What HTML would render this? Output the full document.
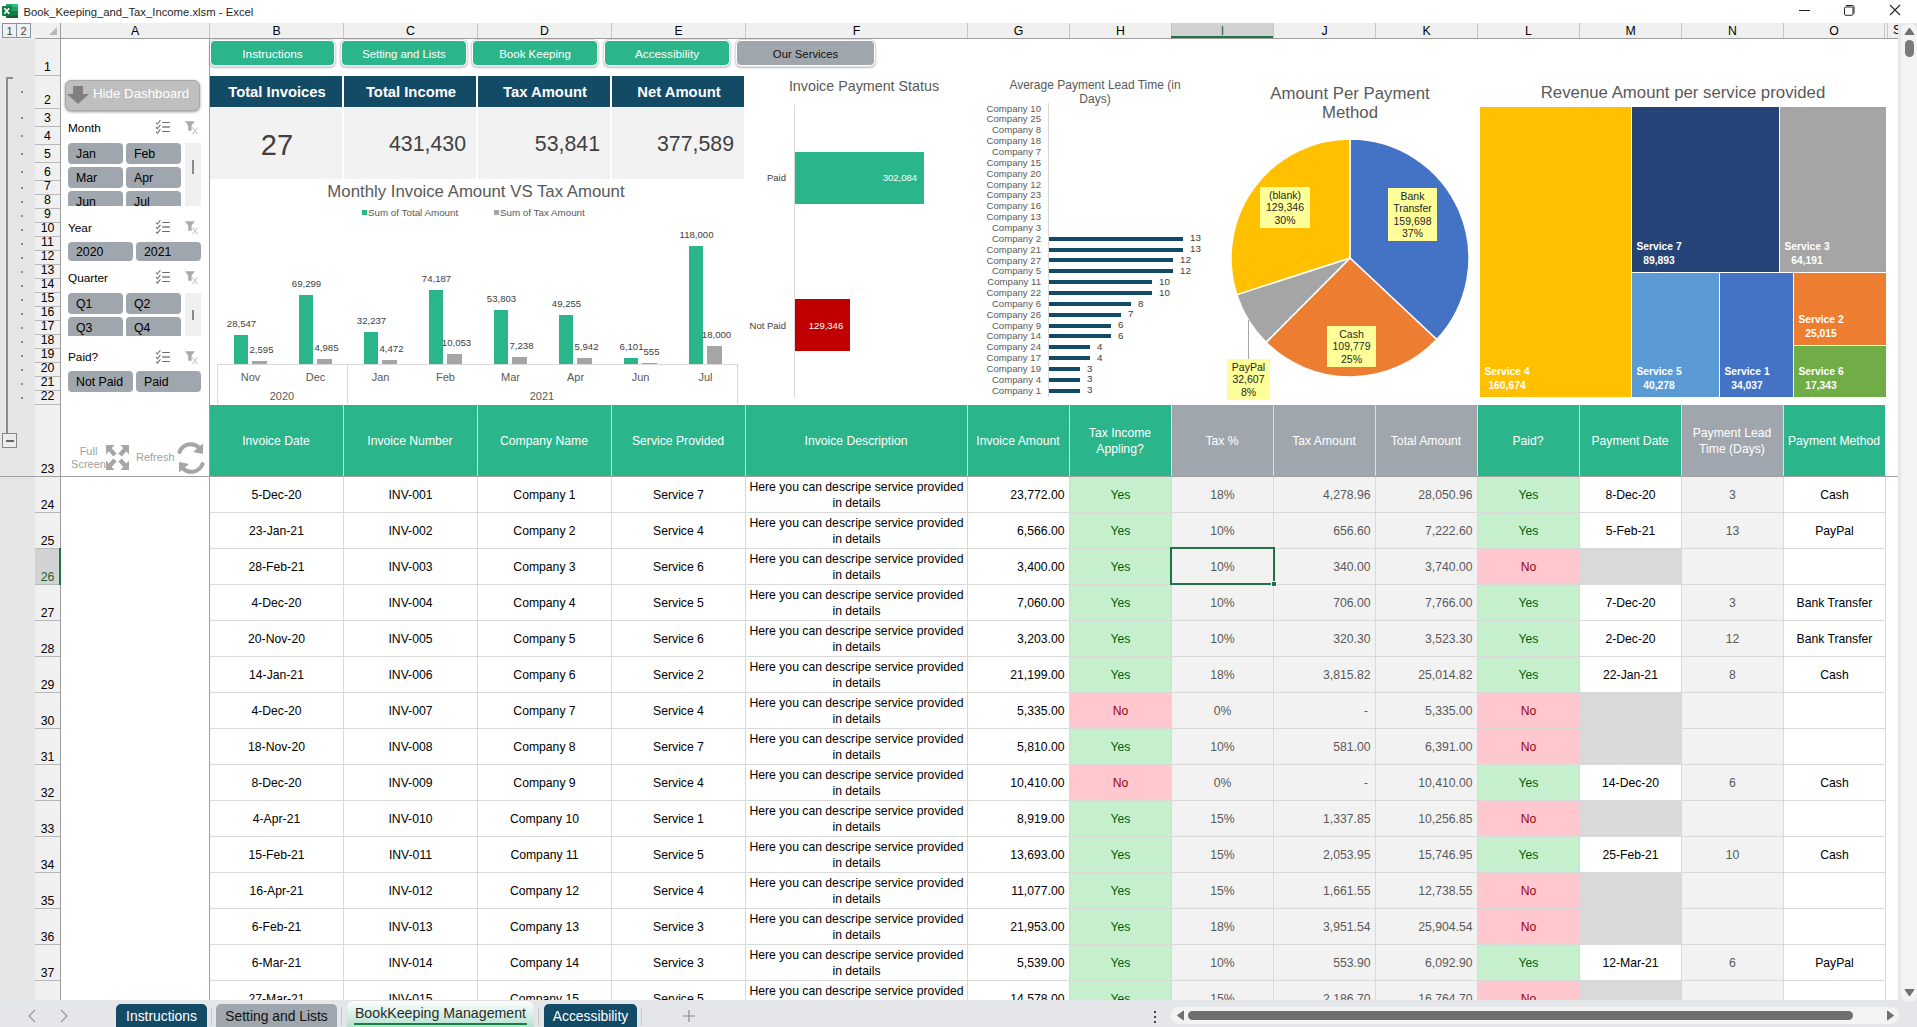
<!DOCTYPE html><html><head><meta charset="utf-8"><title>Book_Keeping_and_Tax_Income.xlsm - Excel</title><style>
html,body{margin:0;padding:0;}body{width:1917px;height:1027px;position:relative;overflow:hidden;background:#fff;font-family:"Liberation Sans",sans-serif;color:#000;}
div{box-sizing:border-box;}
</style></head><body>
<div style="position:absolute;left:0px;top:0px;width:1917px;height:23px;background:#fff;"></div>
<svg style="position:absolute;left:0;top:0" width="24" height="22" viewBox="0 0 24 22"><rect x="6" y="3.9" width="12" height="14" rx="0.8" fill="#21a366"/><rect x="12" y="3.9" width="6" height="2.7" fill="#33c481"/><rect x="6" y="11" width="12" height="4.2" fill="#107c41"/><rect x="6" y="15.2" width="12" height="2.7" fill="#185c37"/><rect x="2" y="6" width="9.7" height="9.9" rx="0.8" fill="#107c41"/><path d="M4.4 8.2 L9.2 13.8 M9.2 8.2 L4.4 13.8" stroke="#fff" stroke-width="1.7"/></svg>
<div style="position:absolute;left:23.5px;top:0.8999999999999986px;height:22.6px;line-height:22.6px;font-size:11.3px;white-space:nowrap;color:#1f1f1f;">Book_Keeping_and_Tax_Income.xlsm - Excel</div>
<div style="position:absolute;left:1799px;top:10px;width:11px;height:1px;background:#222;"></div>
<svg style="position:absolute;left:1842px;top:3px" width="14" height="14" viewBox="0 0 14 14"><rect x="2.5" y="4" width="8.5" height="8.3" rx="1.3" fill="none" stroke="#222" stroke-width="1"/><path d="M4 2.5 H10.5 Q12 2.5 12 4 V10.5" fill="none" stroke="#222" stroke-width="1"/></svg>
<svg style="position:absolute;left:1889px;top:4px" width="12" height="12" viewBox="0 0 12 12"><path d="M1 1 L11 11 M11 1 L1 11" stroke="#222" stroke-width="1.1"/></svg>
<div style="position:absolute;left:0px;top:23px;width:1898px;height:16px;background:#f0f0f0;"></div>
<div style="position:absolute;left:35px;top:38px;width:1863px;height:1px;background:#9e9e9e;"></div>
<div style="position:absolute;left:2px;top:23px;width:15px;height:15px;border:1px solid #8893a0;background:#f0f0f0;"></div>
<div style="position:absolute;left:16px;top:23px;width:15px;height:15px;border:1px solid #8893a0;background:#f0f0f0;"></div>
<div style="position:absolute;left:-0.5px;top:19.5px;width:20px;height:22px;line-height:22px;text-align:center;font-size:11px;white-space:nowrap;color:#444;">1</div>
<div style="position:absolute;left:13.5px;top:19.5px;width:20px;height:22px;line-height:22px;text-align:center;font-size:11px;white-space:nowrap;color:#444;">2</div>
<svg style="position:absolute;left:48px;top:26px" width="10" height="10"><path d="M1 9 L9 9 L9 1 Z" fill="#b8b8b8"/></svg>
<div style="position:absolute;left:60px;top:23px;width:1px;height:15px;background:#9e9e9e;"></div>
<div style="position:absolute;left:209px;top:23px;width:1px;height:15px;background:#c6c6c6;"></div>
<div style="position:absolute;left:105.0px;top:18.7px;width:60px;height:24.6px;line-height:24.6px;text-align:center;font-size:12.3px;white-space:nowrap;color:#000;">A</div>
<div style="position:absolute;left:343px;top:23px;width:1px;height:15px;background:#c6c6c6;"></div>
<div style="position:absolute;left:246.5px;top:18.7px;width:60px;height:24.6px;line-height:24.6px;text-align:center;font-size:12.3px;white-space:nowrap;color:#000;">B</div>
<div style="position:absolute;left:477px;top:23px;width:1px;height:15px;background:#c6c6c6;"></div>
<div style="position:absolute;left:380.5px;top:18.7px;width:60px;height:24.6px;line-height:24.6px;text-align:center;font-size:12.3px;white-space:nowrap;color:#000;">C</div>
<div style="position:absolute;left:611px;top:23px;width:1px;height:15px;background:#c6c6c6;"></div>
<div style="position:absolute;left:514.5px;top:18.7px;width:60px;height:24.6px;line-height:24.6px;text-align:center;font-size:12.3px;white-space:nowrap;color:#000;">D</div>
<div style="position:absolute;left:745px;top:23px;width:1px;height:15px;background:#c6c6c6;"></div>
<div style="position:absolute;left:648.5px;top:18.7px;width:60px;height:24.6px;line-height:24.6px;text-align:center;font-size:12.3px;white-space:nowrap;color:#000;">E</div>
<div style="position:absolute;left:967px;top:23px;width:1px;height:15px;background:#c6c6c6;"></div>
<div style="position:absolute;left:826.5px;top:18.7px;width:60px;height:24.6px;line-height:24.6px;text-align:center;font-size:12.3px;white-space:nowrap;color:#000;">F</div>
<div style="position:absolute;left:1069px;top:23px;width:1px;height:15px;background:#c6c6c6;"></div>
<div style="position:absolute;left:988.5px;top:18.7px;width:60px;height:24.6px;line-height:24.6px;text-align:center;font-size:12.3px;white-space:nowrap;color:#000;">G</div>
<div style="position:absolute;left:1171px;top:23px;width:1px;height:15px;background:#c6c6c6;"></div>
<div style="position:absolute;left:1090.5px;top:18.7px;width:60px;height:24.6px;line-height:24.6px;text-align:center;font-size:12.3px;white-space:nowrap;color:#000;">H</div>
<div style="position:absolute;left:1172px;top:23px;width:101px;height:15px;background:#d2d2d2;"></div>
<div style="position:absolute;left:1171px;top:36px;width:103px;height:2px;background:#217346;"></div>
<div style="position:absolute;left:1273px;top:23px;width:1px;height:15px;background:#c6c6c6;"></div>
<div style="position:absolute;left:1192.5px;top:18.7px;width:60px;height:24.6px;line-height:24.6px;text-align:center;font-size:12.3px;white-space:nowrap;color:#1e5e36;">I</div>
<div style="position:absolute;left:1375px;top:23px;width:1px;height:15px;background:#c6c6c6;"></div>
<div style="position:absolute;left:1294.5px;top:18.7px;width:60px;height:24.6px;line-height:24.6px;text-align:center;font-size:12.3px;white-space:nowrap;color:#000;">J</div>
<div style="position:absolute;left:1477px;top:23px;width:1px;height:15px;background:#c6c6c6;"></div>
<div style="position:absolute;left:1396.5px;top:18.7px;width:60px;height:24.6px;line-height:24.6px;text-align:center;font-size:12.3px;white-space:nowrap;color:#000;">K</div>
<div style="position:absolute;left:1579px;top:23px;width:1px;height:15px;background:#c6c6c6;"></div>
<div style="position:absolute;left:1498.5px;top:18.7px;width:60px;height:24.6px;line-height:24.6px;text-align:center;font-size:12.3px;white-space:nowrap;color:#000;">L</div>
<div style="position:absolute;left:1681px;top:23px;width:1px;height:15px;background:#c6c6c6;"></div>
<div style="position:absolute;left:1600.5px;top:18.7px;width:60px;height:24.6px;line-height:24.6px;text-align:center;font-size:12.3px;white-space:nowrap;color:#000;">M</div>
<div style="position:absolute;left:1783px;top:23px;width:1px;height:15px;background:#c6c6c6;"></div>
<div style="position:absolute;left:1702.5px;top:18.7px;width:60px;height:24.6px;line-height:24.6px;text-align:center;font-size:12.3px;white-space:nowrap;color:#000;">N</div>
<div style="position:absolute;left:1884px;top:23px;width:1px;height:15px;background:#c6c6c6;"></div>
<div style="position:absolute;left:1804.0px;top:18.7px;width:60px;height:24.6px;line-height:24.6px;text-align:center;font-size:12.3px;white-space:nowrap;color:#000;">O</div>
<div style="position:absolute;left:1887px;top:23px;width:1px;height:15px;background:#c6c6c6;"></div>
<div style="position:absolute;left:1888px;top:23px;width:10px;height:15px;overflow:hidden;"><div style="position:absolute;left:5px;top:0;font-size:12.3px;line-height:15px;">S</div></div>
<div style="position:absolute;left:0px;top:39px;width:35px;height:961px;background:#e6e6e6;"></div>
<div style="position:absolute;left:35px;top:39px;width:25px;height:961px;background:#f0f0f0;"></div>
<div style="position:absolute;left:60px;top:39px;width:1px;height:961px;background:#9e9e9e;"></div>
<div style="position:absolute;left:35px;top:75px;width:25px;height:1px;background:#b8b8b8;"></div>
<div style="position:absolute;left:35px;top:59.2px;width:25px;height:16px;line-height:16px;text-align:center;font-size:12.3px;color:#000;">1</div>
<div style="position:absolute;left:35px;top:108px;width:25px;height:1px;background:#b8b8b8;"></div>
<div style="position:absolute;left:35px;top:92.2px;width:25px;height:16px;line-height:16px;text-align:center;font-size:12.3px;color:#000;">2</div>
<div style="position:absolute;left:21px;top:91px;width:2px;height:2px;background:#8a8a8a;"></div>
<div style="position:absolute;left:35px;top:126px;width:25px;height:1px;background:#b8b8b8;"></div>
<div style="position:absolute;left:35px;top:110.2px;width:25px;height:16px;line-height:16px;text-align:center;font-size:12.3px;color:#000;">3</div>
<div style="position:absolute;left:21px;top:117px;width:2px;height:2px;background:#8a8a8a;"></div>
<div style="position:absolute;left:35px;top:144px;width:25px;height:1px;background:#b8b8b8;"></div>
<div style="position:absolute;left:35px;top:128.2px;width:25px;height:16px;line-height:16px;text-align:center;font-size:12.3px;color:#000;">4</div>
<div style="position:absolute;left:21px;top:135px;width:2px;height:2px;background:#8a8a8a;"></div>
<div style="position:absolute;left:35px;top:162px;width:25px;height:1px;background:#b8b8b8;"></div>
<div style="position:absolute;left:35px;top:146.2px;width:25px;height:16px;line-height:16px;text-align:center;font-size:12.3px;color:#000;">5</div>
<div style="position:absolute;left:21px;top:153px;width:2px;height:2px;background:#8a8a8a;"></div>
<div style="position:absolute;left:35px;top:180px;width:25px;height:1px;background:#b8b8b8;"></div>
<div style="position:absolute;left:35px;top:164.2px;width:25px;height:16px;line-height:16px;text-align:center;font-size:12.3px;color:#000;">6</div>
<div style="position:absolute;left:21px;top:171px;width:2px;height:2px;background:#8a8a8a;"></div>
<div style="position:absolute;left:35px;top:194px;width:25px;height:1px;background:#b8b8b8;"></div>
<div style="position:absolute;left:35px;top:178.2px;width:25px;height:16px;line-height:16px;text-align:center;font-size:12.3px;color:#000;">7</div>
<div style="position:absolute;left:21px;top:187px;width:2px;height:2px;background:#8a8a8a;"></div>
<div style="position:absolute;left:35px;top:208px;width:25px;height:1px;background:#b8b8b8;"></div>
<div style="position:absolute;left:35px;top:192.2px;width:25px;height:16px;line-height:16px;text-align:center;font-size:12.3px;color:#000;">8</div>
<div style="position:absolute;left:21px;top:201px;width:2px;height:2px;background:#8a8a8a;"></div>
<div style="position:absolute;left:35px;top:222px;width:25px;height:1px;background:#b8b8b8;"></div>
<div style="position:absolute;left:35px;top:206.2px;width:25px;height:16px;line-height:16px;text-align:center;font-size:12.3px;color:#000;">9</div>
<div style="position:absolute;left:21px;top:215px;width:2px;height:2px;background:#8a8a8a;"></div>
<div style="position:absolute;left:35px;top:236px;width:25px;height:1px;background:#b8b8b8;"></div>
<div style="position:absolute;left:35px;top:220.2px;width:25px;height:16px;line-height:16px;text-align:center;font-size:12.3px;color:#000;">10</div>
<div style="position:absolute;left:21px;top:229px;width:2px;height:2px;background:#8a8a8a;"></div>
<div style="position:absolute;left:35px;top:250px;width:25px;height:1px;background:#b8b8b8;"></div>
<div style="position:absolute;left:35px;top:234.2px;width:25px;height:16px;line-height:16px;text-align:center;font-size:12.3px;color:#000;">11</div>
<div style="position:absolute;left:21px;top:243px;width:2px;height:2px;background:#8a8a8a;"></div>
<div style="position:absolute;left:35px;top:264px;width:25px;height:1px;background:#b8b8b8;"></div>
<div style="position:absolute;left:35px;top:248.2px;width:25px;height:16px;line-height:16px;text-align:center;font-size:12.3px;color:#000;">12</div>
<div style="position:absolute;left:21px;top:257px;width:2px;height:2px;background:#8a8a8a;"></div>
<div style="position:absolute;left:35px;top:278px;width:25px;height:1px;background:#b8b8b8;"></div>
<div style="position:absolute;left:35px;top:262.2px;width:25px;height:16px;line-height:16px;text-align:center;font-size:12.3px;color:#000;">13</div>
<div style="position:absolute;left:21px;top:271px;width:2px;height:2px;background:#8a8a8a;"></div>
<div style="position:absolute;left:35px;top:292px;width:25px;height:1px;background:#b8b8b8;"></div>
<div style="position:absolute;left:35px;top:276.2px;width:25px;height:16px;line-height:16px;text-align:center;font-size:12.3px;color:#000;">14</div>
<div style="position:absolute;left:21px;top:285px;width:2px;height:2px;background:#8a8a8a;"></div>
<div style="position:absolute;left:35px;top:306px;width:25px;height:1px;background:#b8b8b8;"></div>
<div style="position:absolute;left:35px;top:290.2px;width:25px;height:16px;line-height:16px;text-align:center;font-size:12.3px;color:#000;">15</div>
<div style="position:absolute;left:21px;top:299px;width:2px;height:2px;background:#8a8a8a;"></div>
<div style="position:absolute;left:35px;top:320px;width:25px;height:1px;background:#b8b8b8;"></div>
<div style="position:absolute;left:35px;top:304.2px;width:25px;height:16px;line-height:16px;text-align:center;font-size:12.3px;color:#000;">16</div>
<div style="position:absolute;left:21px;top:313px;width:2px;height:2px;background:#8a8a8a;"></div>
<div style="position:absolute;left:35px;top:334px;width:25px;height:1px;background:#b8b8b8;"></div>
<div style="position:absolute;left:35px;top:318.2px;width:25px;height:16px;line-height:16px;text-align:center;font-size:12.3px;color:#000;">17</div>
<div style="position:absolute;left:21px;top:327px;width:2px;height:2px;background:#8a8a8a;"></div>
<div style="position:absolute;left:35px;top:348px;width:25px;height:1px;background:#b8b8b8;"></div>
<div style="position:absolute;left:35px;top:332.2px;width:25px;height:16px;line-height:16px;text-align:center;font-size:12.3px;color:#000;">18</div>
<div style="position:absolute;left:21px;top:341px;width:2px;height:2px;background:#8a8a8a;"></div>
<div style="position:absolute;left:35px;top:362px;width:25px;height:1px;background:#b8b8b8;"></div>
<div style="position:absolute;left:35px;top:346.2px;width:25px;height:16px;line-height:16px;text-align:center;font-size:12.3px;color:#000;">19</div>
<div style="position:absolute;left:21px;top:355px;width:2px;height:2px;background:#8a8a8a;"></div>
<div style="position:absolute;left:35px;top:376px;width:25px;height:1px;background:#b8b8b8;"></div>
<div style="position:absolute;left:35px;top:360.2px;width:25px;height:16px;line-height:16px;text-align:center;font-size:12.3px;color:#000;">20</div>
<div style="position:absolute;left:21px;top:369px;width:2px;height:2px;background:#8a8a8a;"></div>
<div style="position:absolute;left:35px;top:390px;width:25px;height:1px;background:#b8b8b8;"></div>
<div style="position:absolute;left:35px;top:374.2px;width:25px;height:16px;line-height:16px;text-align:center;font-size:12.3px;color:#000;">21</div>
<div style="position:absolute;left:21px;top:383px;width:2px;height:2px;background:#8a8a8a;"></div>
<div style="position:absolute;left:35px;top:404px;width:25px;height:1px;background:#b8b8b8;"></div>
<div style="position:absolute;left:35px;top:388.2px;width:25px;height:16px;line-height:16px;text-align:center;font-size:12.3px;color:#000;">22</div>
<div style="position:absolute;left:21px;top:397px;width:2px;height:2px;background:#8a8a8a;"></div>
<div style="position:absolute;left:35px;top:476px;width:25px;height:1px;background:#b8b8b8;"></div>
<div style="position:absolute;left:35px;top:461px;width:25px;height:16px;line-height:16px;text-align:center;font-size:12.3px;color:#000;">23</div>
<div style="position:absolute;left:35px;top:512px;width:25px;height:1px;background:#b8b8b8;"></div>
<div style="position:absolute;left:35px;top:497px;width:25px;height:16px;line-height:16px;text-align:center;font-size:12.3px;color:#000;">24</div>
<div style="position:absolute;left:35px;top:548px;width:25px;height:1px;background:#b8b8b8;"></div>
<div style="position:absolute;left:35px;top:533px;width:25px;height:16px;line-height:16px;text-align:center;font-size:12.3px;color:#000;">25</div>
<div style="position:absolute;left:35px;top:584px;width:25px;height:1px;background:#b8b8b8;"></div>
<div style="position:absolute;left:35px;top:549px;width:25px;height:35px;background:#d2d2d2;"></div>
<div style="position:absolute;left:59px;top:548px;width:2px;height:37px;background:#217346;"></div>
<div style="position:absolute;left:35px;top:569px;width:25px;height:16px;line-height:16px;text-align:center;font-size:12.3px;color:#1e5e36;">26</div>
<div style="position:absolute;left:35px;top:620px;width:25px;height:1px;background:#b8b8b8;"></div>
<div style="position:absolute;left:35px;top:605px;width:25px;height:16px;line-height:16px;text-align:center;font-size:12.3px;color:#000;">27</div>
<div style="position:absolute;left:35px;top:656px;width:25px;height:1px;background:#b8b8b8;"></div>
<div style="position:absolute;left:35px;top:641px;width:25px;height:16px;line-height:16px;text-align:center;font-size:12.3px;color:#000;">28</div>
<div style="position:absolute;left:35px;top:692px;width:25px;height:1px;background:#b8b8b8;"></div>
<div style="position:absolute;left:35px;top:677px;width:25px;height:16px;line-height:16px;text-align:center;font-size:12.3px;color:#000;">29</div>
<div style="position:absolute;left:35px;top:728px;width:25px;height:1px;background:#b8b8b8;"></div>
<div style="position:absolute;left:35px;top:713px;width:25px;height:16px;line-height:16px;text-align:center;font-size:12.3px;color:#000;">30</div>
<div style="position:absolute;left:35px;top:764px;width:25px;height:1px;background:#b8b8b8;"></div>
<div style="position:absolute;left:35px;top:749px;width:25px;height:16px;line-height:16px;text-align:center;font-size:12.3px;color:#000;">31</div>
<div style="position:absolute;left:35px;top:800px;width:25px;height:1px;background:#b8b8b8;"></div>
<div style="position:absolute;left:35px;top:785px;width:25px;height:16px;line-height:16px;text-align:center;font-size:12.3px;color:#000;">32</div>
<div style="position:absolute;left:35px;top:836px;width:25px;height:1px;background:#b8b8b8;"></div>
<div style="position:absolute;left:35px;top:821px;width:25px;height:16px;line-height:16px;text-align:center;font-size:12.3px;color:#000;">33</div>
<div style="position:absolute;left:35px;top:872px;width:25px;height:1px;background:#b8b8b8;"></div>
<div style="position:absolute;left:35px;top:857px;width:25px;height:16px;line-height:16px;text-align:center;font-size:12.3px;color:#000;">34</div>
<div style="position:absolute;left:35px;top:908px;width:25px;height:1px;background:#b8b8b8;"></div>
<div style="position:absolute;left:35px;top:893px;width:25px;height:16px;line-height:16px;text-align:center;font-size:12.3px;color:#000;">35</div>
<div style="position:absolute;left:35px;top:944px;width:25px;height:1px;background:#b8b8b8;"></div>
<div style="position:absolute;left:35px;top:929px;width:25px;height:16px;line-height:16px;text-align:center;font-size:12.3px;color:#000;">36</div>
<div style="position:absolute;left:35px;top:980px;width:25px;height:1px;background:#b8b8b8;"></div>
<div style="position:absolute;left:35px;top:965px;width:25px;height:16px;line-height:16px;text-align:center;font-size:12.3px;color:#000;">37</div>
<div style="position:absolute;left:35px;top:1001px;width:25px;height:16px;line-height:16px;text-align:center;font-size:12.3px;color:#000;">38</div>
<div style="position:absolute;left:6px;top:77px;width:2px;height:356px;background:#8c8c8c;"></div>
<div style="position:absolute;left:6px;top:77px;width:7px;height:2px;background:#8c8c8c;"></div>
<div style="position:absolute;left:2px;top:433px;width:15px;height:15px;border:1px solid #7f8a96;background:#ececec;"></div>
<div style="position:absolute;left:6px;top:440px;width:8px;height:2px;background:#666;"></div>
<div style="position:absolute;left:61px;top:39px;width:1837px;height:961px;background:#fff;"></div>
<div style="position:absolute;left:209px;top:405px;width:134px;height:71px;background:#2bb58b;"></div>
<div style="position:absolute;left:209px;top:405px;width:134px;height:71px;display:flex;align-items:center;justify-content:center;text-align:center;color:#fff;font-size:12.2px;line-height:16px;">Invoice Date</div>
<div style="position:absolute;left:343px;top:405px;width:134px;height:71px;background:#2bb58b;"></div>
<div style="position:absolute;left:343px;top:405px;width:134px;height:71px;display:flex;align-items:center;justify-content:center;text-align:center;color:#fff;font-size:12.2px;line-height:16px;">Invoice Number</div>
<div style="position:absolute;left:477px;top:405px;width:134px;height:71px;background:#2bb58b;"></div>
<div style="position:absolute;left:477px;top:405px;width:134px;height:71px;display:flex;align-items:center;justify-content:center;text-align:center;color:#fff;font-size:12.2px;line-height:16px;">Company Name</div>
<div style="position:absolute;left:611px;top:405px;width:134px;height:71px;background:#2bb58b;"></div>
<div style="position:absolute;left:611px;top:405px;width:134px;height:71px;display:flex;align-items:center;justify-content:center;text-align:center;color:#fff;font-size:12.2px;line-height:16px;">Service Provided</div>
<div style="position:absolute;left:745px;top:405px;width:222px;height:71px;background:#2bb58b;"></div>
<div style="position:absolute;left:745px;top:405px;width:222px;height:71px;display:flex;align-items:center;justify-content:center;text-align:center;color:#fff;font-size:12.2px;line-height:16px;">Invoice Description</div>
<div style="position:absolute;left:967px;top:405px;width:102px;height:71px;background:#2bb58b;"></div>
<div style="position:absolute;left:967px;top:405px;width:102px;height:71px;display:flex;align-items:center;justify-content:center;text-align:center;color:#fff;font-size:12.2px;line-height:16px;">Invoice Amount</div>
<div style="position:absolute;left:1069px;top:405px;width:102px;height:71px;background:#2bb58b;"></div>
<div style="position:absolute;left:1069px;top:405px;width:102px;height:71px;display:flex;align-items:center;justify-content:center;text-align:center;color:#fff;font-size:12.2px;line-height:16px;">Tax Income<br>Appling?</div>
<div style="position:absolute;left:1171px;top:405px;width:102px;height:71px;background:#9fa6ad;"></div>
<div style="position:absolute;left:1171px;top:405px;width:102px;height:71px;display:flex;align-items:center;justify-content:center;text-align:center;color:#fff;font-size:12.2px;line-height:16px;">Tax %</div>
<div style="position:absolute;left:1273px;top:405px;width:102px;height:71px;background:#9fa6ad;"></div>
<div style="position:absolute;left:1273px;top:405px;width:102px;height:71px;display:flex;align-items:center;justify-content:center;text-align:center;color:#fff;font-size:12.2px;line-height:16px;">Tax Amount</div>
<div style="position:absolute;left:1375px;top:405px;width:102px;height:71px;background:#9fa6ad;"></div>
<div style="position:absolute;left:1375px;top:405px;width:102px;height:71px;display:flex;align-items:center;justify-content:center;text-align:center;color:#fff;font-size:12.2px;line-height:16px;">Total Amount</div>
<div style="position:absolute;left:1477px;top:405px;width:102px;height:71px;background:#2bb58b;"></div>
<div style="position:absolute;left:1477px;top:405px;width:102px;height:71px;display:flex;align-items:center;justify-content:center;text-align:center;color:#fff;font-size:12.2px;line-height:16px;">Paid?</div>
<div style="position:absolute;left:1579px;top:405px;width:102px;height:71px;background:#2bb58b;"></div>
<div style="position:absolute;left:1579px;top:405px;width:102px;height:71px;display:flex;align-items:center;justify-content:center;text-align:center;color:#fff;font-size:12.2px;line-height:16px;">Payment Date</div>
<div style="position:absolute;left:1681px;top:405px;width:102px;height:71px;background:#9fa6ad;"></div>
<div style="position:absolute;left:1681px;top:405px;width:102px;height:71px;display:flex;align-items:center;justify-content:center;text-align:center;color:#fff;font-size:12.2px;line-height:16px;">Payment Lead<br>Time (Days)</div>
<div style="position:absolute;left:1783px;top:405px;width:102px;height:71px;background:#2bb58b;"></div>
<div style="position:absolute;left:1783px;top:405px;width:102px;height:71px;display:flex;align-items:center;justify-content:center;text-align:center;color:#fff;font-size:12.2px;line-height:16px;">Payment Method</div>
<div style="position:absolute;left:343px;top:405px;width:1px;height:71px;background:#dedede;"></div>
<div style="position:absolute;left:477px;top:405px;width:1px;height:71px;background:#dedede;"></div>
<div style="position:absolute;left:611px;top:405px;width:1px;height:71px;background:#dedede;"></div>
<div style="position:absolute;left:745px;top:405px;width:1px;height:71px;background:#dedede;"></div>
<div style="position:absolute;left:967px;top:405px;width:1px;height:71px;background:#dedede;"></div>
<div style="position:absolute;left:1069px;top:405px;width:1px;height:71px;background:#dedede;"></div>
<div style="position:absolute;left:1171px;top:405px;width:1px;height:71px;background:#dedede;"></div>
<div style="position:absolute;left:1273px;top:405px;width:1px;height:71px;background:#dedede;"></div>
<div style="position:absolute;left:1375px;top:405px;width:1px;height:71px;background:#dedede;"></div>
<div style="position:absolute;left:1477px;top:405px;width:1px;height:71px;background:#dedede;"></div>
<div style="position:absolute;left:1579px;top:405px;width:1px;height:71px;background:#dedede;"></div>
<div style="position:absolute;left:1681px;top:405px;width:1px;height:71px;background:#dedede;"></div>
<div style="position:absolute;left:1783px;top:405px;width:1px;height:71px;background:#dedede;"></div>
<div style="position:absolute;left:209px;top:476px;width:134px;height:36px;background:#fff;"></div>
<div style="position:absolute;left:343px;top:476px;width:134px;height:36px;background:#fff;"></div>
<div style="position:absolute;left:477px;top:476px;width:134px;height:36px;background:#fff;"></div>
<div style="position:absolute;left:611px;top:476px;width:134px;height:36px;background:#fff;"></div>
<div style="position:absolute;left:745px;top:476px;width:222px;height:36px;background:#fff;"></div>
<div style="position:absolute;left:967px;top:476px;width:102px;height:36px;background:#fff;"></div>
<div style="position:absolute;left:1069px;top:476px;width:102px;height:36px;background:#c6efce;"></div>
<div style="position:absolute;left:1171px;top:476px;width:102px;height:36px;background:#f2f2f2;"></div>
<div style="position:absolute;left:1273px;top:476px;width:102px;height:36px;background:#f2f2f2;"></div>
<div style="position:absolute;left:1375px;top:476px;width:102px;height:36px;background:#f2f2f2;"></div>
<div style="position:absolute;left:1477px;top:476px;width:102px;height:36px;background:#c6efce;"></div>
<div style="position:absolute;left:1579px;top:476px;width:102px;height:36px;background:#fff;"></div>
<div style="position:absolute;left:1681px;top:476px;width:102px;height:36px;background:#f2f2f2;"></div>
<div style="position:absolute;left:1783px;top:476px;width:102px;height:36px;background:#fff;"></div>
<div style="position:absolute;left:209.5px;top:483.3px;width:134px;height:24.4px;line-height:24.4px;text-align:center;font-size:12.2px;white-space:nowrap;color:#000;">5-Dec-20</div>
<div style="position:absolute;left:343.5px;top:483.3px;width:134px;height:24.4px;line-height:24.4px;text-align:center;font-size:12.2px;white-space:nowrap;color:#000;">INV-001</div>
<div style="position:absolute;left:477.5px;top:483.3px;width:134px;height:24.4px;line-height:24.4px;text-align:center;font-size:12.2px;white-space:nowrap;color:#000;">Company 1</div>
<div style="position:absolute;left:611.5px;top:483.3px;width:134px;height:24.4px;line-height:24.4px;text-align:center;font-size:12.2px;white-space:nowrap;color:#000;">Service 7</div>
<div style="position:absolute;left:1579.5px;top:483.3px;width:102px;height:24.4px;line-height:24.4px;text-align:center;font-size:12.2px;white-space:nowrap;color:#000;">8-Dec-20</div>
<div style="position:absolute;left:1783.5px;top:483.3px;width:102px;height:24.4px;line-height:24.4px;text-align:center;font-size:12.2px;white-space:nowrap;color:#000;">Cash</div>
<div style="position:absolute;left:746px;top:479px;width:221px;text-align:center;font-size:12.2px;line-height:16px;color:#000;">Here you can descripe service provided<br>in details</div>
<div style="position:absolute;left:964.5px;top:483.3px;width:100px;height:24.4px;line-height:24.4px;text-align:right;font-size:12.2px;white-space:nowrap;color:#000;">23,772.00</div>
<div style="position:absolute;left:1070.5px;top:483.3px;width:100px;height:24.4px;line-height:24.4px;text-align:center;font-size:12.2px;white-space:nowrap;color:#006100;">Yes</div>
<div style="position:absolute;left:1172.5px;top:483.3px;width:100px;height:24.4px;line-height:24.4px;text-align:center;font-size:12.2px;white-space:nowrap;color:#595959;">18%</div>
<div style="position:absolute;left:1270.5px;top:483.3px;width:100px;height:24.4px;line-height:24.4px;text-align:right;font-size:12.2px;white-space:nowrap;color:#595959;">4,278.96</div>
<div style="position:absolute;left:1372.5px;top:483.3px;width:100px;height:24.4px;line-height:24.4px;text-align:right;font-size:12.2px;white-space:nowrap;color:#595959;">28,050.96</div>
<div style="position:absolute;left:1478.5px;top:483.3px;width:100px;height:24.4px;line-height:24.4px;text-align:center;font-size:12.2px;white-space:nowrap;color:#006100;">Yes</div>
<div style="position:absolute;left:1682.5px;top:483.3px;width:100px;height:24.4px;line-height:24.4px;text-align:center;font-size:12.2px;white-space:nowrap;color:#595959;">3</div>
<div style="position:absolute;left:209px;top:512px;width:134px;height:36px;background:#fff;"></div>
<div style="position:absolute;left:343px;top:512px;width:134px;height:36px;background:#fff;"></div>
<div style="position:absolute;left:477px;top:512px;width:134px;height:36px;background:#fff;"></div>
<div style="position:absolute;left:611px;top:512px;width:134px;height:36px;background:#fff;"></div>
<div style="position:absolute;left:745px;top:512px;width:222px;height:36px;background:#fff;"></div>
<div style="position:absolute;left:967px;top:512px;width:102px;height:36px;background:#fff;"></div>
<div style="position:absolute;left:1069px;top:512px;width:102px;height:36px;background:#c6efce;"></div>
<div style="position:absolute;left:1171px;top:512px;width:102px;height:36px;background:#f2f2f2;"></div>
<div style="position:absolute;left:1273px;top:512px;width:102px;height:36px;background:#f2f2f2;"></div>
<div style="position:absolute;left:1375px;top:512px;width:102px;height:36px;background:#f2f2f2;"></div>
<div style="position:absolute;left:1477px;top:512px;width:102px;height:36px;background:#c6efce;"></div>
<div style="position:absolute;left:1579px;top:512px;width:102px;height:36px;background:#fff;"></div>
<div style="position:absolute;left:1681px;top:512px;width:102px;height:36px;background:#f2f2f2;"></div>
<div style="position:absolute;left:1783px;top:512px;width:102px;height:36px;background:#fff;"></div>
<div style="position:absolute;left:209.5px;top:519.3px;width:134px;height:24.4px;line-height:24.4px;text-align:center;font-size:12.2px;white-space:nowrap;color:#000;">23-Jan-21</div>
<div style="position:absolute;left:343.5px;top:519.3px;width:134px;height:24.4px;line-height:24.4px;text-align:center;font-size:12.2px;white-space:nowrap;color:#000;">INV-002</div>
<div style="position:absolute;left:477.5px;top:519.3px;width:134px;height:24.4px;line-height:24.4px;text-align:center;font-size:12.2px;white-space:nowrap;color:#000;">Company 2</div>
<div style="position:absolute;left:611.5px;top:519.3px;width:134px;height:24.4px;line-height:24.4px;text-align:center;font-size:12.2px;white-space:nowrap;color:#000;">Service 4</div>
<div style="position:absolute;left:1579.5px;top:519.3px;width:102px;height:24.4px;line-height:24.4px;text-align:center;font-size:12.2px;white-space:nowrap;color:#000;">5-Feb-21</div>
<div style="position:absolute;left:1783.5px;top:519.3px;width:102px;height:24.4px;line-height:24.4px;text-align:center;font-size:12.2px;white-space:nowrap;color:#000;">PayPal</div>
<div style="position:absolute;left:746px;top:515px;width:221px;text-align:center;font-size:12.2px;line-height:16px;color:#000;">Here you can descripe service provided<br>in details</div>
<div style="position:absolute;left:964.5px;top:519.3px;width:100px;height:24.4px;line-height:24.4px;text-align:right;font-size:12.2px;white-space:nowrap;color:#000;">6,566.00</div>
<div style="position:absolute;left:1070.5px;top:519.3px;width:100px;height:24.4px;line-height:24.4px;text-align:center;font-size:12.2px;white-space:nowrap;color:#006100;">Yes</div>
<div style="position:absolute;left:1172.5px;top:519.3px;width:100px;height:24.4px;line-height:24.4px;text-align:center;font-size:12.2px;white-space:nowrap;color:#595959;">10%</div>
<div style="position:absolute;left:1270.5px;top:519.3px;width:100px;height:24.4px;line-height:24.4px;text-align:right;font-size:12.2px;white-space:nowrap;color:#595959;">656.60</div>
<div style="position:absolute;left:1372.5px;top:519.3px;width:100px;height:24.4px;line-height:24.4px;text-align:right;font-size:12.2px;white-space:nowrap;color:#595959;">7,222.60</div>
<div style="position:absolute;left:1478.5px;top:519.3px;width:100px;height:24.4px;line-height:24.4px;text-align:center;font-size:12.2px;white-space:nowrap;color:#006100;">Yes</div>
<div style="position:absolute;left:1682.5px;top:519.3px;width:100px;height:24.4px;line-height:24.4px;text-align:center;font-size:12.2px;white-space:nowrap;color:#595959;">13</div>
<div style="position:absolute;left:209px;top:548px;width:134px;height:36px;background:#fff;"></div>
<div style="position:absolute;left:343px;top:548px;width:134px;height:36px;background:#fff;"></div>
<div style="position:absolute;left:477px;top:548px;width:134px;height:36px;background:#fff;"></div>
<div style="position:absolute;left:611px;top:548px;width:134px;height:36px;background:#fff;"></div>
<div style="position:absolute;left:745px;top:548px;width:222px;height:36px;background:#fff;"></div>
<div style="position:absolute;left:967px;top:548px;width:102px;height:36px;background:#fff;"></div>
<div style="position:absolute;left:1069px;top:548px;width:102px;height:36px;background:#c6efce;"></div>
<div style="position:absolute;left:1171px;top:548px;width:102px;height:36px;background:#f2f2f2;"></div>
<div style="position:absolute;left:1273px;top:548px;width:102px;height:36px;background:#f2f2f2;"></div>
<div style="position:absolute;left:1375px;top:548px;width:102px;height:36px;background:#f2f2f2;"></div>
<div style="position:absolute;left:1477px;top:548px;width:102px;height:36px;background:#ffc7ce;"></div>
<div style="position:absolute;left:1579px;top:548px;width:102px;height:36px;background:#d9d9d9;"></div>
<div style="position:absolute;left:1681px;top:548px;width:102px;height:36px;background:#f2f2f2;"></div>
<div style="position:absolute;left:1783px;top:548px;width:102px;height:36px;background:#fff;"></div>
<div style="position:absolute;left:209.5px;top:555.3px;width:134px;height:24.4px;line-height:24.4px;text-align:center;font-size:12.2px;white-space:nowrap;color:#000;">28-Feb-21</div>
<div style="position:absolute;left:343.5px;top:555.3px;width:134px;height:24.4px;line-height:24.4px;text-align:center;font-size:12.2px;white-space:nowrap;color:#000;">INV-003</div>
<div style="position:absolute;left:477.5px;top:555.3px;width:134px;height:24.4px;line-height:24.4px;text-align:center;font-size:12.2px;white-space:nowrap;color:#000;">Company 3</div>
<div style="position:absolute;left:611.5px;top:555.3px;width:134px;height:24.4px;line-height:24.4px;text-align:center;font-size:12.2px;white-space:nowrap;color:#000;">Service 6</div>
<div style="position:absolute;left:1579.5px;top:555.3px;width:102px;height:24.4px;line-height:24.4px;text-align:center;font-size:12.2px;white-space:nowrap;color:#000;"></div>
<div style="position:absolute;left:1783.5px;top:555.3px;width:102px;height:24.4px;line-height:24.4px;text-align:center;font-size:12.2px;white-space:nowrap;color:#000;"></div>
<div style="position:absolute;left:746px;top:551px;width:221px;text-align:center;font-size:12.2px;line-height:16px;color:#000;">Here you can descripe service provided<br>in details</div>
<div style="position:absolute;left:964.5px;top:555.3px;width:100px;height:24.4px;line-height:24.4px;text-align:right;font-size:12.2px;white-space:nowrap;color:#000;">3,400.00</div>
<div style="position:absolute;left:1070.5px;top:555.3px;width:100px;height:24.4px;line-height:24.4px;text-align:center;font-size:12.2px;white-space:nowrap;color:#006100;">Yes</div>
<div style="position:absolute;left:1172.5px;top:555.3px;width:100px;height:24.4px;line-height:24.4px;text-align:center;font-size:12.2px;white-space:nowrap;color:#595959;">10%</div>
<div style="position:absolute;left:1270.5px;top:555.3px;width:100px;height:24.4px;line-height:24.4px;text-align:right;font-size:12.2px;white-space:nowrap;color:#595959;">340.00</div>
<div style="position:absolute;left:1372.5px;top:555.3px;width:100px;height:24.4px;line-height:24.4px;text-align:right;font-size:12.2px;white-space:nowrap;color:#595959;">3,740.00</div>
<div style="position:absolute;left:1478.5px;top:555.3px;width:100px;height:24.4px;line-height:24.4px;text-align:center;font-size:12.2px;white-space:nowrap;color:#9c0006;">No</div>
<div style="position:absolute;left:1682.5px;top:555.3px;width:100px;height:24.4px;line-height:24.4px;text-align:center;font-size:12.2px;white-space:nowrap;color:#595959;"></div>
<div style="position:absolute;left:209px;top:584px;width:134px;height:36px;background:#fff;"></div>
<div style="position:absolute;left:343px;top:584px;width:134px;height:36px;background:#fff;"></div>
<div style="position:absolute;left:477px;top:584px;width:134px;height:36px;background:#fff;"></div>
<div style="position:absolute;left:611px;top:584px;width:134px;height:36px;background:#fff;"></div>
<div style="position:absolute;left:745px;top:584px;width:222px;height:36px;background:#fff;"></div>
<div style="position:absolute;left:967px;top:584px;width:102px;height:36px;background:#fff;"></div>
<div style="position:absolute;left:1069px;top:584px;width:102px;height:36px;background:#c6efce;"></div>
<div style="position:absolute;left:1171px;top:584px;width:102px;height:36px;background:#f2f2f2;"></div>
<div style="position:absolute;left:1273px;top:584px;width:102px;height:36px;background:#f2f2f2;"></div>
<div style="position:absolute;left:1375px;top:584px;width:102px;height:36px;background:#f2f2f2;"></div>
<div style="position:absolute;left:1477px;top:584px;width:102px;height:36px;background:#c6efce;"></div>
<div style="position:absolute;left:1579px;top:584px;width:102px;height:36px;background:#fff;"></div>
<div style="position:absolute;left:1681px;top:584px;width:102px;height:36px;background:#f2f2f2;"></div>
<div style="position:absolute;left:1783px;top:584px;width:102px;height:36px;background:#fff;"></div>
<div style="position:absolute;left:209.5px;top:591.3px;width:134px;height:24.4px;line-height:24.4px;text-align:center;font-size:12.2px;white-space:nowrap;color:#000;">4-Dec-20</div>
<div style="position:absolute;left:343.5px;top:591.3px;width:134px;height:24.4px;line-height:24.4px;text-align:center;font-size:12.2px;white-space:nowrap;color:#000;">INV-004</div>
<div style="position:absolute;left:477.5px;top:591.3px;width:134px;height:24.4px;line-height:24.4px;text-align:center;font-size:12.2px;white-space:nowrap;color:#000;">Company 4</div>
<div style="position:absolute;left:611.5px;top:591.3px;width:134px;height:24.4px;line-height:24.4px;text-align:center;font-size:12.2px;white-space:nowrap;color:#000;">Service 5</div>
<div style="position:absolute;left:1579.5px;top:591.3px;width:102px;height:24.4px;line-height:24.4px;text-align:center;font-size:12.2px;white-space:nowrap;color:#000;">7-Dec-20</div>
<div style="position:absolute;left:1783.5px;top:591.3px;width:102px;height:24.4px;line-height:24.4px;text-align:center;font-size:12.2px;white-space:nowrap;color:#000;">Bank Transfer</div>
<div style="position:absolute;left:746px;top:587px;width:221px;text-align:center;font-size:12.2px;line-height:16px;color:#000;">Here you can descripe service provided<br>in details</div>
<div style="position:absolute;left:964.5px;top:591.3px;width:100px;height:24.4px;line-height:24.4px;text-align:right;font-size:12.2px;white-space:nowrap;color:#000;">7,060.00</div>
<div style="position:absolute;left:1070.5px;top:591.3px;width:100px;height:24.4px;line-height:24.4px;text-align:center;font-size:12.2px;white-space:nowrap;color:#006100;">Yes</div>
<div style="position:absolute;left:1172.5px;top:591.3px;width:100px;height:24.4px;line-height:24.4px;text-align:center;font-size:12.2px;white-space:nowrap;color:#595959;">10%</div>
<div style="position:absolute;left:1270.5px;top:591.3px;width:100px;height:24.4px;line-height:24.4px;text-align:right;font-size:12.2px;white-space:nowrap;color:#595959;">706.00</div>
<div style="position:absolute;left:1372.5px;top:591.3px;width:100px;height:24.4px;line-height:24.4px;text-align:right;font-size:12.2px;white-space:nowrap;color:#595959;">7,766.00</div>
<div style="position:absolute;left:1478.5px;top:591.3px;width:100px;height:24.4px;line-height:24.4px;text-align:center;font-size:12.2px;white-space:nowrap;color:#006100;">Yes</div>
<div style="position:absolute;left:1682.5px;top:591.3px;width:100px;height:24.4px;line-height:24.4px;text-align:center;font-size:12.2px;white-space:nowrap;color:#595959;">3</div>
<div style="position:absolute;left:209px;top:620px;width:134px;height:36px;background:#fff;"></div>
<div style="position:absolute;left:343px;top:620px;width:134px;height:36px;background:#fff;"></div>
<div style="position:absolute;left:477px;top:620px;width:134px;height:36px;background:#fff;"></div>
<div style="position:absolute;left:611px;top:620px;width:134px;height:36px;background:#fff;"></div>
<div style="position:absolute;left:745px;top:620px;width:222px;height:36px;background:#fff;"></div>
<div style="position:absolute;left:967px;top:620px;width:102px;height:36px;background:#fff;"></div>
<div style="position:absolute;left:1069px;top:620px;width:102px;height:36px;background:#c6efce;"></div>
<div style="position:absolute;left:1171px;top:620px;width:102px;height:36px;background:#f2f2f2;"></div>
<div style="position:absolute;left:1273px;top:620px;width:102px;height:36px;background:#f2f2f2;"></div>
<div style="position:absolute;left:1375px;top:620px;width:102px;height:36px;background:#f2f2f2;"></div>
<div style="position:absolute;left:1477px;top:620px;width:102px;height:36px;background:#c6efce;"></div>
<div style="position:absolute;left:1579px;top:620px;width:102px;height:36px;background:#fff;"></div>
<div style="position:absolute;left:1681px;top:620px;width:102px;height:36px;background:#f2f2f2;"></div>
<div style="position:absolute;left:1783px;top:620px;width:102px;height:36px;background:#fff;"></div>
<div style="position:absolute;left:209.5px;top:627.3px;width:134px;height:24.4px;line-height:24.4px;text-align:center;font-size:12.2px;white-space:nowrap;color:#000;">20-Nov-20</div>
<div style="position:absolute;left:343.5px;top:627.3px;width:134px;height:24.4px;line-height:24.4px;text-align:center;font-size:12.2px;white-space:nowrap;color:#000;">INV-005</div>
<div style="position:absolute;left:477.5px;top:627.3px;width:134px;height:24.4px;line-height:24.4px;text-align:center;font-size:12.2px;white-space:nowrap;color:#000;">Company 5</div>
<div style="position:absolute;left:611.5px;top:627.3px;width:134px;height:24.4px;line-height:24.4px;text-align:center;font-size:12.2px;white-space:nowrap;color:#000;">Service 6</div>
<div style="position:absolute;left:1579.5px;top:627.3px;width:102px;height:24.4px;line-height:24.4px;text-align:center;font-size:12.2px;white-space:nowrap;color:#000;">2-Dec-20</div>
<div style="position:absolute;left:1783.5px;top:627.3px;width:102px;height:24.4px;line-height:24.4px;text-align:center;font-size:12.2px;white-space:nowrap;color:#000;">Bank Transfer</div>
<div style="position:absolute;left:746px;top:623px;width:221px;text-align:center;font-size:12.2px;line-height:16px;color:#000;">Here you can descripe service provided<br>in details</div>
<div style="position:absolute;left:964.5px;top:627.3px;width:100px;height:24.4px;line-height:24.4px;text-align:right;font-size:12.2px;white-space:nowrap;color:#000;">3,203.00</div>
<div style="position:absolute;left:1070.5px;top:627.3px;width:100px;height:24.4px;line-height:24.4px;text-align:center;font-size:12.2px;white-space:nowrap;color:#006100;">Yes</div>
<div style="position:absolute;left:1172.5px;top:627.3px;width:100px;height:24.4px;line-height:24.4px;text-align:center;font-size:12.2px;white-space:nowrap;color:#595959;">10%</div>
<div style="position:absolute;left:1270.5px;top:627.3px;width:100px;height:24.4px;line-height:24.4px;text-align:right;font-size:12.2px;white-space:nowrap;color:#595959;">320.30</div>
<div style="position:absolute;left:1372.5px;top:627.3px;width:100px;height:24.4px;line-height:24.4px;text-align:right;font-size:12.2px;white-space:nowrap;color:#595959;">3,523.30</div>
<div style="position:absolute;left:1478.5px;top:627.3px;width:100px;height:24.4px;line-height:24.4px;text-align:center;font-size:12.2px;white-space:nowrap;color:#006100;">Yes</div>
<div style="position:absolute;left:1682.5px;top:627.3px;width:100px;height:24.4px;line-height:24.4px;text-align:center;font-size:12.2px;white-space:nowrap;color:#595959;">12</div>
<div style="position:absolute;left:209px;top:656px;width:134px;height:36px;background:#fff;"></div>
<div style="position:absolute;left:343px;top:656px;width:134px;height:36px;background:#fff;"></div>
<div style="position:absolute;left:477px;top:656px;width:134px;height:36px;background:#fff;"></div>
<div style="position:absolute;left:611px;top:656px;width:134px;height:36px;background:#fff;"></div>
<div style="position:absolute;left:745px;top:656px;width:222px;height:36px;background:#fff;"></div>
<div style="position:absolute;left:967px;top:656px;width:102px;height:36px;background:#fff;"></div>
<div style="position:absolute;left:1069px;top:656px;width:102px;height:36px;background:#c6efce;"></div>
<div style="position:absolute;left:1171px;top:656px;width:102px;height:36px;background:#f2f2f2;"></div>
<div style="position:absolute;left:1273px;top:656px;width:102px;height:36px;background:#f2f2f2;"></div>
<div style="position:absolute;left:1375px;top:656px;width:102px;height:36px;background:#f2f2f2;"></div>
<div style="position:absolute;left:1477px;top:656px;width:102px;height:36px;background:#c6efce;"></div>
<div style="position:absolute;left:1579px;top:656px;width:102px;height:36px;background:#fff;"></div>
<div style="position:absolute;left:1681px;top:656px;width:102px;height:36px;background:#f2f2f2;"></div>
<div style="position:absolute;left:1783px;top:656px;width:102px;height:36px;background:#fff;"></div>
<div style="position:absolute;left:209.5px;top:663.3px;width:134px;height:24.4px;line-height:24.4px;text-align:center;font-size:12.2px;white-space:nowrap;color:#000;">14-Jan-21</div>
<div style="position:absolute;left:343.5px;top:663.3px;width:134px;height:24.4px;line-height:24.4px;text-align:center;font-size:12.2px;white-space:nowrap;color:#000;">INV-006</div>
<div style="position:absolute;left:477.5px;top:663.3px;width:134px;height:24.4px;line-height:24.4px;text-align:center;font-size:12.2px;white-space:nowrap;color:#000;">Company 6</div>
<div style="position:absolute;left:611.5px;top:663.3px;width:134px;height:24.4px;line-height:24.4px;text-align:center;font-size:12.2px;white-space:nowrap;color:#000;">Service 2</div>
<div style="position:absolute;left:1579.5px;top:663.3px;width:102px;height:24.4px;line-height:24.4px;text-align:center;font-size:12.2px;white-space:nowrap;color:#000;">22-Jan-21</div>
<div style="position:absolute;left:1783.5px;top:663.3px;width:102px;height:24.4px;line-height:24.4px;text-align:center;font-size:12.2px;white-space:nowrap;color:#000;">Cash</div>
<div style="position:absolute;left:746px;top:659px;width:221px;text-align:center;font-size:12.2px;line-height:16px;color:#000;">Here you can descripe service provided<br>in details</div>
<div style="position:absolute;left:964.5px;top:663.3px;width:100px;height:24.4px;line-height:24.4px;text-align:right;font-size:12.2px;white-space:nowrap;color:#000;">21,199.00</div>
<div style="position:absolute;left:1070.5px;top:663.3px;width:100px;height:24.4px;line-height:24.4px;text-align:center;font-size:12.2px;white-space:nowrap;color:#006100;">Yes</div>
<div style="position:absolute;left:1172.5px;top:663.3px;width:100px;height:24.4px;line-height:24.4px;text-align:center;font-size:12.2px;white-space:nowrap;color:#595959;">18%</div>
<div style="position:absolute;left:1270.5px;top:663.3px;width:100px;height:24.4px;line-height:24.4px;text-align:right;font-size:12.2px;white-space:nowrap;color:#595959;">3,815.82</div>
<div style="position:absolute;left:1372.5px;top:663.3px;width:100px;height:24.4px;line-height:24.4px;text-align:right;font-size:12.2px;white-space:nowrap;color:#595959;">25,014.82</div>
<div style="position:absolute;left:1478.5px;top:663.3px;width:100px;height:24.4px;line-height:24.4px;text-align:center;font-size:12.2px;white-space:nowrap;color:#006100;">Yes</div>
<div style="position:absolute;left:1682.5px;top:663.3px;width:100px;height:24.4px;line-height:24.4px;text-align:center;font-size:12.2px;white-space:nowrap;color:#595959;">8</div>
<div style="position:absolute;left:209px;top:692px;width:134px;height:36px;background:#fff;"></div>
<div style="position:absolute;left:343px;top:692px;width:134px;height:36px;background:#fff;"></div>
<div style="position:absolute;left:477px;top:692px;width:134px;height:36px;background:#fff;"></div>
<div style="position:absolute;left:611px;top:692px;width:134px;height:36px;background:#fff;"></div>
<div style="position:absolute;left:745px;top:692px;width:222px;height:36px;background:#fff;"></div>
<div style="position:absolute;left:967px;top:692px;width:102px;height:36px;background:#fff;"></div>
<div style="position:absolute;left:1069px;top:692px;width:102px;height:36px;background:#ffc7ce;"></div>
<div style="position:absolute;left:1171px;top:692px;width:102px;height:36px;background:#f2f2f2;"></div>
<div style="position:absolute;left:1273px;top:692px;width:102px;height:36px;background:#f2f2f2;"></div>
<div style="position:absolute;left:1375px;top:692px;width:102px;height:36px;background:#f2f2f2;"></div>
<div style="position:absolute;left:1477px;top:692px;width:102px;height:36px;background:#ffc7ce;"></div>
<div style="position:absolute;left:1579px;top:692px;width:102px;height:36px;background:#d9d9d9;"></div>
<div style="position:absolute;left:1681px;top:692px;width:102px;height:36px;background:#f2f2f2;"></div>
<div style="position:absolute;left:1783px;top:692px;width:102px;height:36px;background:#fff;"></div>
<div style="position:absolute;left:209.5px;top:699.3px;width:134px;height:24.4px;line-height:24.4px;text-align:center;font-size:12.2px;white-space:nowrap;color:#000;">4-Dec-20</div>
<div style="position:absolute;left:343.5px;top:699.3px;width:134px;height:24.4px;line-height:24.4px;text-align:center;font-size:12.2px;white-space:nowrap;color:#000;">INV-007</div>
<div style="position:absolute;left:477.5px;top:699.3px;width:134px;height:24.4px;line-height:24.4px;text-align:center;font-size:12.2px;white-space:nowrap;color:#000;">Company 7</div>
<div style="position:absolute;left:611.5px;top:699.3px;width:134px;height:24.4px;line-height:24.4px;text-align:center;font-size:12.2px;white-space:nowrap;color:#000;">Service 4</div>
<div style="position:absolute;left:1579.5px;top:699.3px;width:102px;height:24.4px;line-height:24.4px;text-align:center;font-size:12.2px;white-space:nowrap;color:#000;"></div>
<div style="position:absolute;left:1783.5px;top:699.3px;width:102px;height:24.4px;line-height:24.4px;text-align:center;font-size:12.2px;white-space:nowrap;color:#000;"></div>
<div style="position:absolute;left:746px;top:695px;width:221px;text-align:center;font-size:12.2px;line-height:16px;color:#000;">Here you can descripe service provided<br>in details</div>
<div style="position:absolute;left:964.5px;top:699.3px;width:100px;height:24.4px;line-height:24.4px;text-align:right;font-size:12.2px;white-space:nowrap;color:#000;">5,335.00</div>
<div style="position:absolute;left:1070.5px;top:699.3px;width:100px;height:24.4px;line-height:24.4px;text-align:center;font-size:12.2px;white-space:nowrap;color:#9c0006;">No</div>
<div style="position:absolute;left:1172.5px;top:699.3px;width:100px;height:24.4px;line-height:24.4px;text-align:center;font-size:12.2px;white-space:nowrap;color:#595959;">0%</div>
<div style="position:absolute;left:1268px;top:699.3px;width:100px;height:24.4px;line-height:24.4px;text-align:right;font-size:12.2px;white-space:nowrap;color:#595959;">-</div>
<div style="position:absolute;left:1372.5px;top:699.3px;width:100px;height:24.4px;line-height:24.4px;text-align:right;font-size:12.2px;white-space:nowrap;color:#595959;">5,335.00</div>
<div style="position:absolute;left:1478.5px;top:699.3px;width:100px;height:24.4px;line-height:24.4px;text-align:center;font-size:12.2px;white-space:nowrap;color:#9c0006;">No</div>
<div style="position:absolute;left:1682.5px;top:699.3px;width:100px;height:24.4px;line-height:24.4px;text-align:center;font-size:12.2px;white-space:nowrap;color:#595959;"></div>
<div style="position:absolute;left:209px;top:728px;width:134px;height:36px;background:#fff;"></div>
<div style="position:absolute;left:343px;top:728px;width:134px;height:36px;background:#fff;"></div>
<div style="position:absolute;left:477px;top:728px;width:134px;height:36px;background:#fff;"></div>
<div style="position:absolute;left:611px;top:728px;width:134px;height:36px;background:#fff;"></div>
<div style="position:absolute;left:745px;top:728px;width:222px;height:36px;background:#fff;"></div>
<div style="position:absolute;left:967px;top:728px;width:102px;height:36px;background:#fff;"></div>
<div style="position:absolute;left:1069px;top:728px;width:102px;height:36px;background:#c6efce;"></div>
<div style="position:absolute;left:1171px;top:728px;width:102px;height:36px;background:#f2f2f2;"></div>
<div style="position:absolute;left:1273px;top:728px;width:102px;height:36px;background:#f2f2f2;"></div>
<div style="position:absolute;left:1375px;top:728px;width:102px;height:36px;background:#f2f2f2;"></div>
<div style="position:absolute;left:1477px;top:728px;width:102px;height:36px;background:#ffc7ce;"></div>
<div style="position:absolute;left:1579px;top:728px;width:102px;height:36px;background:#d9d9d9;"></div>
<div style="position:absolute;left:1681px;top:728px;width:102px;height:36px;background:#f2f2f2;"></div>
<div style="position:absolute;left:1783px;top:728px;width:102px;height:36px;background:#fff;"></div>
<div style="position:absolute;left:209.5px;top:735.3px;width:134px;height:24.4px;line-height:24.4px;text-align:center;font-size:12.2px;white-space:nowrap;color:#000;">18-Nov-20</div>
<div style="position:absolute;left:343.5px;top:735.3px;width:134px;height:24.4px;line-height:24.4px;text-align:center;font-size:12.2px;white-space:nowrap;color:#000;">INV-008</div>
<div style="position:absolute;left:477.5px;top:735.3px;width:134px;height:24.4px;line-height:24.4px;text-align:center;font-size:12.2px;white-space:nowrap;color:#000;">Company 8</div>
<div style="position:absolute;left:611.5px;top:735.3px;width:134px;height:24.4px;line-height:24.4px;text-align:center;font-size:12.2px;white-space:nowrap;color:#000;">Service 7</div>
<div style="position:absolute;left:1579.5px;top:735.3px;width:102px;height:24.4px;line-height:24.4px;text-align:center;font-size:12.2px;white-space:nowrap;color:#000;"></div>
<div style="position:absolute;left:1783.5px;top:735.3px;width:102px;height:24.4px;line-height:24.4px;text-align:center;font-size:12.2px;white-space:nowrap;color:#000;"></div>
<div style="position:absolute;left:746px;top:731px;width:221px;text-align:center;font-size:12.2px;line-height:16px;color:#000;">Here you can descripe service provided<br>in details</div>
<div style="position:absolute;left:964.5px;top:735.3px;width:100px;height:24.4px;line-height:24.4px;text-align:right;font-size:12.2px;white-space:nowrap;color:#000;">5,810.00</div>
<div style="position:absolute;left:1070.5px;top:735.3px;width:100px;height:24.4px;line-height:24.4px;text-align:center;font-size:12.2px;white-space:nowrap;color:#006100;">Yes</div>
<div style="position:absolute;left:1172.5px;top:735.3px;width:100px;height:24.4px;line-height:24.4px;text-align:center;font-size:12.2px;white-space:nowrap;color:#595959;">10%</div>
<div style="position:absolute;left:1270.5px;top:735.3px;width:100px;height:24.4px;line-height:24.4px;text-align:right;font-size:12.2px;white-space:nowrap;color:#595959;">581.00</div>
<div style="position:absolute;left:1372.5px;top:735.3px;width:100px;height:24.4px;line-height:24.4px;text-align:right;font-size:12.2px;white-space:nowrap;color:#595959;">6,391.00</div>
<div style="position:absolute;left:1478.5px;top:735.3px;width:100px;height:24.4px;line-height:24.4px;text-align:center;font-size:12.2px;white-space:nowrap;color:#9c0006;">No</div>
<div style="position:absolute;left:1682.5px;top:735.3px;width:100px;height:24.4px;line-height:24.4px;text-align:center;font-size:12.2px;white-space:nowrap;color:#595959;"></div>
<div style="position:absolute;left:209px;top:764px;width:134px;height:36px;background:#fff;"></div>
<div style="position:absolute;left:343px;top:764px;width:134px;height:36px;background:#fff;"></div>
<div style="position:absolute;left:477px;top:764px;width:134px;height:36px;background:#fff;"></div>
<div style="position:absolute;left:611px;top:764px;width:134px;height:36px;background:#fff;"></div>
<div style="position:absolute;left:745px;top:764px;width:222px;height:36px;background:#fff;"></div>
<div style="position:absolute;left:967px;top:764px;width:102px;height:36px;background:#fff;"></div>
<div style="position:absolute;left:1069px;top:764px;width:102px;height:36px;background:#ffc7ce;"></div>
<div style="position:absolute;left:1171px;top:764px;width:102px;height:36px;background:#f2f2f2;"></div>
<div style="position:absolute;left:1273px;top:764px;width:102px;height:36px;background:#f2f2f2;"></div>
<div style="position:absolute;left:1375px;top:764px;width:102px;height:36px;background:#f2f2f2;"></div>
<div style="position:absolute;left:1477px;top:764px;width:102px;height:36px;background:#c6efce;"></div>
<div style="position:absolute;left:1579px;top:764px;width:102px;height:36px;background:#fff;"></div>
<div style="position:absolute;left:1681px;top:764px;width:102px;height:36px;background:#f2f2f2;"></div>
<div style="position:absolute;left:1783px;top:764px;width:102px;height:36px;background:#fff;"></div>
<div style="position:absolute;left:209.5px;top:771.3px;width:134px;height:24.4px;line-height:24.4px;text-align:center;font-size:12.2px;white-space:nowrap;color:#000;">8-Dec-20</div>
<div style="position:absolute;left:343.5px;top:771.3px;width:134px;height:24.4px;line-height:24.4px;text-align:center;font-size:12.2px;white-space:nowrap;color:#000;">INV-009</div>
<div style="position:absolute;left:477.5px;top:771.3px;width:134px;height:24.4px;line-height:24.4px;text-align:center;font-size:12.2px;white-space:nowrap;color:#000;">Company 9</div>
<div style="position:absolute;left:611.5px;top:771.3px;width:134px;height:24.4px;line-height:24.4px;text-align:center;font-size:12.2px;white-space:nowrap;color:#000;">Service 4</div>
<div style="position:absolute;left:1579.5px;top:771.3px;width:102px;height:24.4px;line-height:24.4px;text-align:center;font-size:12.2px;white-space:nowrap;color:#000;">14-Dec-20</div>
<div style="position:absolute;left:1783.5px;top:771.3px;width:102px;height:24.4px;line-height:24.4px;text-align:center;font-size:12.2px;white-space:nowrap;color:#000;">Cash</div>
<div style="position:absolute;left:746px;top:767px;width:221px;text-align:center;font-size:12.2px;line-height:16px;color:#000;">Here you can descripe service provided<br>in details</div>
<div style="position:absolute;left:964.5px;top:771.3px;width:100px;height:24.4px;line-height:24.4px;text-align:right;font-size:12.2px;white-space:nowrap;color:#000;">10,410.00</div>
<div style="position:absolute;left:1070.5px;top:771.3px;width:100px;height:24.4px;line-height:24.4px;text-align:center;font-size:12.2px;white-space:nowrap;color:#9c0006;">No</div>
<div style="position:absolute;left:1172.5px;top:771.3px;width:100px;height:24.4px;line-height:24.4px;text-align:center;font-size:12.2px;white-space:nowrap;color:#595959;">0%</div>
<div style="position:absolute;left:1268px;top:771.3px;width:100px;height:24.4px;line-height:24.4px;text-align:right;font-size:12.2px;white-space:nowrap;color:#595959;">-</div>
<div style="position:absolute;left:1372.5px;top:771.3px;width:100px;height:24.4px;line-height:24.4px;text-align:right;font-size:12.2px;white-space:nowrap;color:#595959;">10,410.00</div>
<div style="position:absolute;left:1478.5px;top:771.3px;width:100px;height:24.4px;line-height:24.4px;text-align:center;font-size:12.2px;white-space:nowrap;color:#006100;">Yes</div>
<div style="position:absolute;left:1682.5px;top:771.3px;width:100px;height:24.4px;line-height:24.4px;text-align:center;font-size:12.2px;white-space:nowrap;color:#595959;">6</div>
<div style="position:absolute;left:209px;top:800px;width:134px;height:36px;background:#fff;"></div>
<div style="position:absolute;left:343px;top:800px;width:134px;height:36px;background:#fff;"></div>
<div style="position:absolute;left:477px;top:800px;width:134px;height:36px;background:#fff;"></div>
<div style="position:absolute;left:611px;top:800px;width:134px;height:36px;background:#fff;"></div>
<div style="position:absolute;left:745px;top:800px;width:222px;height:36px;background:#fff;"></div>
<div style="position:absolute;left:967px;top:800px;width:102px;height:36px;background:#fff;"></div>
<div style="position:absolute;left:1069px;top:800px;width:102px;height:36px;background:#c6efce;"></div>
<div style="position:absolute;left:1171px;top:800px;width:102px;height:36px;background:#f2f2f2;"></div>
<div style="position:absolute;left:1273px;top:800px;width:102px;height:36px;background:#f2f2f2;"></div>
<div style="position:absolute;left:1375px;top:800px;width:102px;height:36px;background:#f2f2f2;"></div>
<div style="position:absolute;left:1477px;top:800px;width:102px;height:36px;background:#ffc7ce;"></div>
<div style="position:absolute;left:1579px;top:800px;width:102px;height:36px;background:#d9d9d9;"></div>
<div style="position:absolute;left:1681px;top:800px;width:102px;height:36px;background:#f2f2f2;"></div>
<div style="position:absolute;left:1783px;top:800px;width:102px;height:36px;background:#fff;"></div>
<div style="position:absolute;left:209.5px;top:807.3px;width:134px;height:24.4px;line-height:24.4px;text-align:center;font-size:12.2px;white-space:nowrap;color:#000;">4-Apr-21</div>
<div style="position:absolute;left:343.5px;top:807.3px;width:134px;height:24.4px;line-height:24.4px;text-align:center;font-size:12.2px;white-space:nowrap;color:#000;">INV-010</div>
<div style="position:absolute;left:477.5px;top:807.3px;width:134px;height:24.4px;line-height:24.4px;text-align:center;font-size:12.2px;white-space:nowrap;color:#000;">Company 10</div>
<div style="position:absolute;left:611.5px;top:807.3px;width:134px;height:24.4px;line-height:24.4px;text-align:center;font-size:12.2px;white-space:nowrap;color:#000;">Service 1</div>
<div style="position:absolute;left:1579.5px;top:807.3px;width:102px;height:24.4px;line-height:24.4px;text-align:center;font-size:12.2px;white-space:nowrap;color:#000;"></div>
<div style="position:absolute;left:1783.5px;top:807.3px;width:102px;height:24.4px;line-height:24.4px;text-align:center;font-size:12.2px;white-space:nowrap;color:#000;"></div>
<div style="position:absolute;left:746px;top:803px;width:221px;text-align:center;font-size:12.2px;line-height:16px;color:#000;">Here you can descripe service provided<br>in details</div>
<div style="position:absolute;left:964.5px;top:807.3px;width:100px;height:24.4px;line-height:24.4px;text-align:right;font-size:12.2px;white-space:nowrap;color:#000;">8,919.00</div>
<div style="position:absolute;left:1070.5px;top:807.3px;width:100px;height:24.4px;line-height:24.4px;text-align:center;font-size:12.2px;white-space:nowrap;color:#006100;">Yes</div>
<div style="position:absolute;left:1172.5px;top:807.3px;width:100px;height:24.4px;line-height:24.4px;text-align:center;font-size:12.2px;white-space:nowrap;color:#595959;">15%</div>
<div style="position:absolute;left:1270.5px;top:807.3px;width:100px;height:24.4px;line-height:24.4px;text-align:right;font-size:12.2px;white-space:nowrap;color:#595959;">1,337.85</div>
<div style="position:absolute;left:1372.5px;top:807.3px;width:100px;height:24.4px;line-height:24.4px;text-align:right;font-size:12.2px;white-space:nowrap;color:#595959;">10,256.85</div>
<div style="position:absolute;left:1478.5px;top:807.3px;width:100px;height:24.4px;line-height:24.4px;text-align:center;font-size:12.2px;white-space:nowrap;color:#9c0006;">No</div>
<div style="position:absolute;left:1682.5px;top:807.3px;width:100px;height:24.4px;line-height:24.4px;text-align:center;font-size:12.2px;white-space:nowrap;color:#595959;"></div>
<div style="position:absolute;left:209px;top:836px;width:134px;height:36px;background:#fff;"></div>
<div style="position:absolute;left:343px;top:836px;width:134px;height:36px;background:#fff;"></div>
<div style="position:absolute;left:477px;top:836px;width:134px;height:36px;background:#fff;"></div>
<div style="position:absolute;left:611px;top:836px;width:134px;height:36px;background:#fff;"></div>
<div style="position:absolute;left:745px;top:836px;width:222px;height:36px;background:#fff;"></div>
<div style="position:absolute;left:967px;top:836px;width:102px;height:36px;background:#fff;"></div>
<div style="position:absolute;left:1069px;top:836px;width:102px;height:36px;background:#c6efce;"></div>
<div style="position:absolute;left:1171px;top:836px;width:102px;height:36px;background:#f2f2f2;"></div>
<div style="position:absolute;left:1273px;top:836px;width:102px;height:36px;background:#f2f2f2;"></div>
<div style="position:absolute;left:1375px;top:836px;width:102px;height:36px;background:#f2f2f2;"></div>
<div style="position:absolute;left:1477px;top:836px;width:102px;height:36px;background:#c6efce;"></div>
<div style="position:absolute;left:1579px;top:836px;width:102px;height:36px;background:#fff;"></div>
<div style="position:absolute;left:1681px;top:836px;width:102px;height:36px;background:#f2f2f2;"></div>
<div style="position:absolute;left:1783px;top:836px;width:102px;height:36px;background:#fff;"></div>
<div style="position:absolute;left:209.5px;top:843.3px;width:134px;height:24.4px;line-height:24.4px;text-align:center;font-size:12.2px;white-space:nowrap;color:#000;">15-Feb-21</div>
<div style="position:absolute;left:343.5px;top:843.3px;width:134px;height:24.4px;line-height:24.4px;text-align:center;font-size:12.2px;white-space:nowrap;color:#000;">INV-011</div>
<div style="position:absolute;left:477.5px;top:843.3px;width:134px;height:24.4px;line-height:24.4px;text-align:center;font-size:12.2px;white-space:nowrap;color:#000;">Company 11</div>
<div style="position:absolute;left:611.5px;top:843.3px;width:134px;height:24.4px;line-height:24.4px;text-align:center;font-size:12.2px;white-space:nowrap;color:#000;">Service 5</div>
<div style="position:absolute;left:1579.5px;top:843.3px;width:102px;height:24.4px;line-height:24.4px;text-align:center;font-size:12.2px;white-space:nowrap;color:#000;">25-Feb-21</div>
<div style="position:absolute;left:1783.5px;top:843.3px;width:102px;height:24.4px;line-height:24.4px;text-align:center;font-size:12.2px;white-space:nowrap;color:#000;">Cash</div>
<div style="position:absolute;left:746px;top:839px;width:221px;text-align:center;font-size:12.2px;line-height:16px;color:#000;">Here you can descripe service provided<br>in details</div>
<div style="position:absolute;left:964.5px;top:843.3px;width:100px;height:24.4px;line-height:24.4px;text-align:right;font-size:12.2px;white-space:nowrap;color:#000;">13,693.00</div>
<div style="position:absolute;left:1070.5px;top:843.3px;width:100px;height:24.4px;line-height:24.4px;text-align:center;font-size:12.2px;white-space:nowrap;color:#006100;">Yes</div>
<div style="position:absolute;left:1172.5px;top:843.3px;width:100px;height:24.4px;line-height:24.4px;text-align:center;font-size:12.2px;white-space:nowrap;color:#595959;">15%</div>
<div style="position:absolute;left:1270.5px;top:843.3px;width:100px;height:24.4px;line-height:24.4px;text-align:right;font-size:12.2px;white-space:nowrap;color:#595959;">2,053.95</div>
<div style="position:absolute;left:1372.5px;top:843.3px;width:100px;height:24.4px;line-height:24.4px;text-align:right;font-size:12.2px;white-space:nowrap;color:#595959;">15,746.95</div>
<div style="position:absolute;left:1478.5px;top:843.3px;width:100px;height:24.4px;line-height:24.4px;text-align:center;font-size:12.2px;white-space:nowrap;color:#006100;">Yes</div>
<div style="position:absolute;left:1682.5px;top:843.3px;width:100px;height:24.4px;line-height:24.4px;text-align:center;font-size:12.2px;white-space:nowrap;color:#595959;">10</div>
<div style="position:absolute;left:209px;top:872px;width:134px;height:36px;background:#fff;"></div>
<div style="position:absolute;left:343px;top:872px;width:134px;height:36px;background:#fff;"></div>
<div style="position:absolute;left:477px;top:872px;width:134px;height:36px;background:#fff;"></div>
<div style="position:absolute;left:611px;top:872px;width:134px;height:36px;background:#fff;"></div>
<div style="position:absolute;left:745px;top:872px;width:222px;height:36px;background:#fff;"></div>
<div style="position:absolute;left:967px;top:872px;width:102px;height:36px;background:#fff;"></div>
<div style="position:absolute;left:1069px;top:872px;width:102px;height:36px;background:#c6efce;"></div>
<div style="position:absolute;left:1171px;top:872px;width:102px;height:36px;background:#f2f2f2;"></div>
<div style="position:absolute;left:1273px;top:872px;width:102px;height:36px;background:#f2f2f2;"></div>
<div style="position:absolute;left:1375px;top:872px;width:102px;height:36px;background:#f2f2f2;"></div>
<div style="position:absolute;left:1477px;top:872px;width:102px;height:36px;background:#ffc7ce;"></div>
<div style="position:absolute;left:1579px;top:872px;width:102px;height:36px;background:#d9d9d9;"></div>
<div style="position:absolute;left:1681px;top:872px;width:102px;height:36px;background:#f2f2f2;"></div>
<div style="position:absolute;left:1783px;top:872px;width:102px;height:36px;background:#fff;"></div>
<div style="position:absolute;left:209.5px;top:879.3px;width:134px;height:24.4px;line-height:24.4px;text-align:center;font-size:12.2px;white-space:nowrap;color:#000;">16-Apr-21</div>
<div style="position:absolute;left:343.5px;top:879.3px;width:134px;height:24.4px;line-height:24.4px;text-align:center;font-size:12.2px;white-space:nowrap;color:#000;">INV-012</div>
<div style="position:absolute;left:477.5px;top:879.3px;width:134px;height:24.4px;line-height:24.4px;text-align:center;font-size:12.2px;white-space:nowrap;color:#000;">Company 12</div>
<div style="position:absolute;left:611.5px;top:879.3px;width:134px;height:24.4px;line-height:24.4px;text-align:center;font-size:12.2px;white-space:nowrap;color:#000;">Service 4</div>
<div style="position:absolute;left:1579.5px;top:879.3px;width:102px;height:24.4px;line-height:24.4px;text-align:center;font-size:12.2px;white-space:nowrap;color:#000;"></div>
<div style="position:absolute;left:1783.5px;top:879.3px;width:102px;height:24.4px;line-height:24.4px;text-align:center;font-size:12.2px;white-space:nowrap;color:#000;"></div>
<div style="position:absolute;left:746px;top:875px;width:221px;text-align:center;font-size:12.2px;line-height:16px;color:#000;">Here you can descripe service provided<br>in details</div>
<div style="position:absolute;left:964.5px;top:879.3px;width:100px;height:24.4px;line-height:24.4px;text-align:right;font-size:12.2px;white-space:nowrap;color:#000;">11,077.00</div>
<div style="position:absolute;left:1070.5px;top:879.3px;width:100px;height:24.4px;line-height:24.4px;text-align:center;font-size:12.2px;white-space:nowrap;color:#006100;">Yes</div>
<div style="position:absolute;left:1172.5px;top:879.3px;width:100px;height:24.4px;line-height:24.4px;text-align:center;font-size:12.2px;white-space:nowrap;color:#595959;">15%</div>
<div style="position:absolute;left:1270.5px;top:879.3px;width:100px;height:24.4px;line-height:24.4px;text-align:right;font-size:12.2px;white-space:nowrap;color:#595959;">1,661.55</div>
<div style="position:absolute;left:1372.5px;top:879.3px;width:100px;height:24.4px;line-height:24.4px;text-align:right;font-size:12.2px;white-space:nowrap;color:#595959;">12,738.55</div>
<div style="position:absolute;left:1478.5px;top:879.3px;width:100px;height:24.4px;line-height:24.4px;text-align:center;font-size:12.2px;white-space:nowrap;color:#9c0006;">No</div>
<div style="position:absolute;left:1682.5px;top:879.3px;width:100px;height:24.4px;line-height:24.4px;text-align:center;font-size:12.2px;white-space:nowrap;color:#595959;"></div>
<div style="position:absolute;left:209px;top:908px;width:134px;height:36px;background:#fff;"></div>
<div style="position:absolute;left:343px;top:908px;width:134px;height:36px;background:#fff;"></div>
<div style="position:absolute;left:477px;top:908px;width:134px;height:36px;background:#fff;"></div>
<div style="position:absolute;left:611px;top:908px;width:134px;height:36px;background:#fff;"></div>
<div style="position:absolute;left:745px;top:908px;width:222px;height:36px;background:#fff;"></div>
<div style="position:absolute;left:967px;top:908px;width:102px;height:36px;background:#fff;"></div>
<div style="position:absolute;left:1069px;top:908px;width:102px;height:36px;background:#c6efce;"></div>
<div style="position:absolute;left:1171px;top:908px;width:102px;height:36px;background:#f2f2f2;"></div>
<div style="position:absolute;left:1273px;top:908px;width:102px;height:36px;background:#f2f2f2;"></div>
<div style="position:absolute;left:1375px;top:908px;width:102px;height:36px;background:#f2f2f2;"></div>
<div style="position:absolute;left:1477px;top:908px;width:102px;height:36px;background:#ffc7ce;"></div>
<div style="position:absolute;left:1579px;top:908px;width:102px;height:36px;background:#d9d9d9;"></div>
<div style="position:absolute;left:1681px;top:908px;width:102px;height:36px;background:#f2f2f2;"></div>
<div style="position:absolute;left:1783px;top:908px;width:102px;height:36px;background:#fff;"></div>
<div style="position:absolute;left:209.5px;top:915.3px;width:134px;height:24.4px;line-height:24.4px;text-align:center;font-size:12.2px;white-space:nowrap;color:#000;">6-Feb-21</div>
<div style="position:absolute;left:343.5px;top:915.3px;width:134px;height:24.4px;line-height:24.4px;text-align:center;font-size:12.2px;white-space:nowrap;color:#000;">INV-013</div>
<div style="position:absolute;left:477.5px;top:915.3px;width:134px;height:24.4px;line-height:24.4px;text-align:center;font-size:12.2px;white-space:nowrap;color:#000;">Company 13</div>
<div style="position:absolute;left:611.5px;top:915.3px;width:134px;height:24.4px;line-height:24.4px;text-align:center;font-size:12.2px;white-space:nowrap;color:#000;">Service 3</div>
<div style="position:absolute;left:1579.5px;top:915.3px;width:102px;height:24.4px;line-height:24.4px;text-align:center;font-size:12.2px;white-space:nowrap;color:#000;"></div>
<div style="position:absolute;left:1783.5px;top:915.3px;width:102px;height:24.4px;line-height:24.4px;text-align:center;font-size:12.2px;white-space:nowrap;color:#000;"></div>
<div style="position:absolute;left:746px;top:911px;width:221px;text-align:center;font-size:12.2px;line-height:16px;color:#000;">Here you can descripe service provided<br>in details</div>
<div style="position:absolute;left:964.5px;top:915.3px;width:100px;height:24.4px;line-height:24.4px;text-align:right;font-size:12.2px;white-space:nowrap;color:#000;">21,953.00</div>
<div style="position:absolute;left:1070.5px;top:915.3px;width:100px;height:24.4px;line-height:24.4px;text-align:center;font-size:12.2px;white-space:nowrap;color:#006100;">Yes</div>
<div style="position:absolute;left:1172.5px;top:915.3px;width:100px;height:24.4px;line-height:24.4px;text-align:center;font-size:12.2px;white-space:nowrap;color:#595959;">18%</div>
<div style="position:absolute;left:1270.5px;top:915.3px;width:100px;height:24.4px;line-height:24.4px;text-align:right;font-size:12.2px;white-space:nowrap;color:#595959;">3,951.54</div>
<div style="position:absolute;left:1372.5px;top:915.3px;width:100px;height:24.4px;line-height:24.4px;text-align:right;font-size:12.2px;white-space:nowrap;color:#595959;">25,904.54</div>
<div style="position:absolute;left:1478.5px;top:915.3px;width:100px;height:24.4px;line-height:24.4px;text-align:center;font-size:12.2px;white-space:nowrap;color:#9c0006;">No</div>
<div style="position:absolute;left:1682.5px;top:915.3px;width:100px;height:24.4px;line-height:24.4px;text-align:center;font-size:12.2px;white-space:nowrap;color:#595959;"></div>
<div style="position:absolute;left:209px;top:944px;width:134px;height:36px;background:#fff;"></div>
<div style="position:absolute;left:343px;top:944px;width:134px;height:36px;background:#fff;"></div>
<div style="position:absolute;left:477px;top:944px;width:134px;height:36px;background:#fff;"></div>
<div style="position:absolute;left:611px;top:944px;width:134px;height:36px;background:#fff;"></div>
<div style="position:absolute;left:745px;top:944px;width:222px;height:36px;background:#fff;"></div>
<div style="position:absolute;left:967px;top:944px;width:102px;height:36px;background:#fff;"></div>
<div style="position:absolute;left:1069px;top:944px;width:102px;height:36px;background:#c6efce;"></div>
<div style="position:absolute;left:1171px;top:944px;width:102px;height:36px;background:#f2f2f2;"></div>
<div style="position:absolute;left:1273px;top:944px;width:102px;height:36px;background:#f2f2f2;"></div>
<div style="position:absolute;left:1375px;top:944px;width:102px;height:36px;background:#f2f2f2;"></div>
<div style="position:absolute;left:1477px;top:944px;width:102px;height:36px;background:#c6efce;"></div>
<div style="position:absolute;left:1579px;top:944px;width:102px;height:36px;background:#fff;"></div>
<div style="position:absolute;left:1681px;top:944px;width:102px;height:36px;background:#f2f2f2;"></div>
<div style="position:absolute;left:1783px;top:944px;width:102px;height:36px;background:#fff;"></div>
<div style="position:absolute;left:209.5px;top:951.3px;width:134px;height:24.4px;line-height:24.4px;text-align:center;font-size:12.2px;white-space:nowrap;color:#000;">6-Mar-21</div>
<div style="position:absolute;left:343.5px;top:951.3px;width:134px;height:24.4px;line-height:24.4px;text-align:center;font-size:12.2px;white-space:nowrap;color:#000;">INV-014</div>
<div style="position:absolute;left:477.5px;top:951.3px;width:134px;height:24.4px;line-height:24.4px;text-align:center;font-size:12.2px;white-space:nowrap;color:#000;">Company 14</div>
<div style="position:absolute;left:611.5px;top:951.3px;width:134px;height:24.4px;line-height:24.4px;text-align:center;font-size:12.2px;white-space:nowrap;color:#000;">Service 3</div>
<div style="position:absolute;left:1579.5px;top:951.3px;width:102px;height:24.4px;line-height:24.4px;text-align:center;font-size:12.2px;white-space:nowrap;color:#000;">12-Mar-21</div>
<div style="position:absolute;left:1783.5px;top:951.3px;width:102px;height:24.4px;line-height:24.4px;text-align:center;font-size:12.2px;white-space:nowrap;color:#000;">PayPal</div>
<div style="position:absolute;left:746px;top:947px;width:221px;text-align:center;font-size:12.2px;line-height:16px;color:#000;">Here you can descripe service provided<br>in details</div>
<div style="position:absolute;left:964.5px;top:951.3px;width:100px;height:24.4px;line-height:24.4px;text-align:right;font-size:12.2px;white-space:nowrap;color:#000;">5,539.00</div>
<div style="position:absolute;left:1070.5px;top:951.3px;width:100px;height:24.4px;line-height:24.4px;text-align:center;font-size:12.2px;white-space:nowrap;color:#006100;">Yes</div>
<div style="position:absolute;left:1172.5px;top:951.3px;width:100px;height:24.4px;line-height:24.4px;text-align:center;font-size:12.2px;white-space:nowrap;color:#595959;">10%</div>
<div style="position:absolute;left:1270.5px;top:951.3px;width:100px;height:24.4px;line-height:24.4px;text-align:right;font-size:12.2px;white-space:nowrap;color:#595959;">553.90</div>
<div style="position:absolute;left:1372.5px;top:951.3px;width:100px;height:24.4px;line-height:24.4px;text-align:right;font-size:12.2px;white-space:nowrap;color:#595959;">6,092.90</div>
<div style="position:absolute;left:1478.5px;top:951.3px;width:100px;height:24.4px;line-height:24.4px;text-align:center;font-size:12.2px;white-space:nowrap;color:#006100;">Yes</div>
<div style="position:absolute;left:1682.5px;top:951.3px;width:100px;height:24.4px;line-height:24.4px;text-align:center;font-size:12.2px;white-space:nowrap;color:#595959;">6</div>
<div style="position:absolute;left:209px;top:980px;width:134px;height:36px;background:#fff;"></div>
<div style="position:absolute;left:343px;top:980px;width:134px;height:36px;background:#fff;"></div>
<div style="position:absolute;left:477px;top:980px;width:134px;height:36px;background:#fff;"></div>
<div style="position:absolute;left:611px;top:980px;width:134px;height:36px;background:#fff;"></div>
<div style="position:absolute;left:745px;top:980px;width:222px;height:36px;background:#fff;"></div>
<div style="position:absolute;left:967px;top:980px;width:102px;height:36px;background:#fff;"></div>
<div style="position:absolute;left:1069px;top:980px;width:102px;height:36px;background:#c6efce;"></div>
<div style="position:absolute;left:1171px;top:980px;width:102px;height:36px;background:#f2f2f2;"></div>
<div style="position:absolute;left:1273px;top:980px;width:102px;height:36px;background:#f2f2f2;"></div>
<div style="position:absolute;left:1375px;top:980px;width:102px;height:36px;background:#f2f2f2;"></div>
<div style="position:absolute;left:1477px;top:980px;width:102px;height:36px;background:#ffc7ce;"></div>
<div style="position:absolute;left:1579px;top:980px;width:102px;height:36px;background:#d9d9d9;"></div>
<div style="position:absolute;left:1681px;top:980px;width:102px;height:36px;background:#f2f2f2;"></div>
<div style="position:absolute;left:1783px;top:980px;width:102px;height:36px;background:#fff;"></div>
<div style="position:absolute;left:209.5px;top:987.3px;width:134px;height:24.4px;line-height:24.4px;text-align:center;font-size:12.2px;white-space:nowrap;color:#000;">27-Mar-21</div>
<div style="position:absolute;left:343.5px;top:987.3px;width:134px;height:24.4px;line-height:24.4px;text-align:center;font-size:12.2px;white-space:nowrap;color:#000;">INV-015</div>
<div style="position:absolute;left:477.5px;top:987.3px;width:134px;height:24.4px;line-height:24.4px;text-align:center;font-size:12.2px;white-space:nowrap;color:#000;">Company 15</div>
<div style="position:absolute;left:611.5px;top:987.3px;width:134px;height:24.4px;line-height:24.4px;text-align:center;font-size:12.2px;white-space:nowrap;color:#000;">Service 5</div>
<div style="position:absolute;left:1579.5px;top:987.3px;width:102px;height:24.4px;line-height:24.4px;text-align:center;font-size:12.2px;white-space:nowrap;color:#000;"></div>
<div style="position:absolute;left:1783.5px;top:987.3px;width:102px;height:24.4px;line-height:24.4px;text-align:center;font-size:12.2px;white-space:nowrap;color:#000;"></div>
<div style="position:absolute;left:746px;top:983px;width:221px;text-align:center;font-size:12.2px;line-height:16px;color:#000;">Here you can descripe service provided<br>in details</div>
<div style="position:absolute;left:964.5px;top:987.3px;width:100px;height:24.4px;line-height:24.4px;text-align:right;font-size:12.2px;white-space:nowrap;color:#000;">14,578.00</div>
<div style="position:absolute;left:1070.5px;top:987.3px;width:100px;height:24.4px;line-height:24.4px;text-align:center;font-size:12.2px;white-space:nowrap;color:#006100;">Yes</div>
<div style="position:absolute;left:1172.5px;top:987.3px;width:100px;height:24.4px;line-height:24.4px;text-align:center;font-size:12.2px;white-space:nowrap;color:#595959;">15%</div>
<div style="position:absolute;left:1270.5px;top:987.3px;width:100px;height:24.4px;line-height:24.4px;text-align:right;font-size:12.2px;white-space:nowrap;color:#595959;">2,186.70</div>
<div style="position:absolute;left:1372.5px;top:987.3px;width:100px;height:24.4px;line-height:24.4px;text-align:right;font-size:12.2px;white-space:nowrap;color:#595959;">16,764.70</div>
<div style="position:absolute;left:1478.5px;top:987.3px;width:100px;height:24.4px;line-height:24.4px;text-align:center;font-size:12.2px;white-space:nowrap;color:#9c0006;">No</div>
<div style="position:absolute;left:1682.5px;top:987.3px;width:100px;height:24.4px;line-height:24.4px;text-align:center;font-size:12.2px;white-space:nowrap;color:#595959;"></div>
<div style="position:absolute;left:209px;top:476px;width:1px;height:524px;background:#d9d9d9;"></div>
<div style="position:absolute;left:343px;top:476px;width:1px;height:524px;background:#d9d9d9;"></div>
<div style="position:absolute;left:477px;top:476px;width:1px;height:524px;background:#d9d9d9;"></div>
<div style="position:absolute;left:611px;top:476px;width:1px;height:524px;background:#d9d9d9;"></div>
<div style="position:absolute;left:745px;top:476px;width:1px;height:524px;background:#d9d9d9;"></div>
<div style="position:absolute;left:967px;top:476px;width:1px;height:524px;background:#d9d9d9;"></div>
<div style="position:absolute;left:1069px;top:476px;width:1px;height:524px;background:#d9d9d9;"></div>
<div style="position:absolute;left:1171px;top:476px;width:1px;height:524px;background:#d9d9d9;"></div>
<div style="position:absolute;left:1273px;top:476px;width:1px;height:524px;background:#d9d9d9;"></div>
<div style="position:absolute;left:1375px;top:476px;width:1px;height:524px;background:#d9d9d9;"></div>
<div style="position:absolute;left:1477px;top:476px;width:1px;height:524px;background:#d9d9d9;"></div>
<div style="position:absolute;left:1579px;top:476px;width:1px;height:524px;background:#d9d9d9;"></div>
<div style="position:absolute;left:1681px;top:476px;width:1px;height:524px;background:#d9d9d9;"></div>
<div style="position:absolute;left:1783px;top:476px;width:1px;height:524px;background:#d9d9d9;"></div>
<div style="position:absolute;left:1885px;top:476px;width:1px;height:524px;background:#d9d9d9;"></div>
<div style="position:absolute;left:209px;top:512px;width:1677px;height:1px;background:#d9d9d9;"></div>
<div style="position:absolute;left:209px;top:548px;width:1677px;height:1px;background:#d9d9d9;"></div>
<div style="position:absolute;left:209px;top:584px;width:1677px;height:1px;background:#d9d9d9;"></div>
<div style="position:absolute;left:209px;top:620px;width:1677px;height:1px;background:#d9d9d9;"></div>
<div style="position:absolute;left:209px;top:656px;width:1677px;height:1px;background:#d9d9d9;"></div>
<div style="position:absolute;left:209px;top:692px;width:1677px;height:1px;background:#d9d9d9;"></div>
<div style="position:absolute;left:209px;top:728px;width:1677px;height:1px;background:#d9d9d9;"></div>
<div style="position:absolute;left:209px;top:764px;width:1677px;height:1px;background:#d9d9d9;"></div>
<div style="position:absolute;left:209px;top:800px;width:1677px;height:1px;background:#d9d9d9;"></div>
<div style="position:absolute;left:209px;top:836px;width:1677px;height:1px;background:#d9d9d9;"></div>
<div style="position:absolute;left:209px;top:872px;width:1677px;height:1px;background:#d9d9d9;"></div>
<div style="position:absolute;left:209px;top:908px;width:1677px;height:1px;background:#d9d9d9;"></div>
<div style="position:absolute;left:209px;top:944px;width:1677px;height:1px;background:#d9d9d9;"></div>
<div style="position:absolute;left:209px;top:980px;width:1677px;height:1px;background:#d9d9d9;"></div>
<div style="position:absolute;left:1170px;top:547px;width:105px;height:38px;border:2px solid #217346;"></div>
<div style="position:absolute;left:1271px;top:581px;width:6px;height:6px;background:#217346;border:1px solid #fff;"></div>
<div style="position:absolute;left:210px;top:40px;width:125px;height:26px;background:#2bb58b;border-radius:5px;box-shadow:0 0 0 1px #dcdcdc,0 1px 2px 1px rgba(0,0,0,0.25);border:1px solid #fff;color:#fff;font-size:11.8px;line-height:26px;text-align:center;">Instructions</div>
<div style="position:absolute;left:341px;top:40px;width:126px;height:26px;background:#2bb58b;border-radius:5px;box-shadow:0 0 0 1px #dcdcdc,0 1px 2px 1px rgba(0,0,0,0.25);border:1px solid #fff;color:#fff;font-size:11.3px;line-height:26px;text-align:center;">Setting and Lists</div>
<div style="position:absolute;left:472px;top:40px;width:126px;height:26px;background:#2bb58b;border-radius:5px;box-shadow:0 0 0 1px #dcdcdc,0 1px 2px 1px rgba(0,0,0,0.25);border:1px solid #fff;color:#fff;font-size:11.5px;line-height:26px;text-align:center;">Book Keeping</div>
<div style="position:absolute;left:604px;top:40px;width:126px;height:26px;background:#2bb58b;border-radius:5px;box-shadow:0 0 0 1px #dcdcdc,0 1px 2px 1px rgba(0,0,0,0.25);border:1px solid #fff;color:#fff;font-size:11.8px;line-height:26px;text-align:center;">Accessibility</div>
<div style="position:absolute;left:736px;top:40px;width:139px;height:26px;background:#9fa6ad;border-radius:5px;box-shadow:0 0 0 1px #dcdcdc,0 1px 2px 1px rgba(0,0,0,0.25);border:1px solid #fff;color:#111;font-size:11.3px;line-height:26px;text-align:center;">Our Services</div>
<div style="position:absolute;left:210px;top:76px;width:132px;height:31px;background:#134a66;"></div>
<div style="position:absolute;left:211.0px;top:77.7px;width:132px;height:29.6px;line-height:29.6px;text-align:center;font-size:14.8px;white-space:nowrap;color:#fff;font-weight:bold;">Total Invoices</div>
<div style="position:absolute;left:210px;top:108px;width:132px;height:71px;background:#f2f2f2;"></div>
<div style="position:absolute;left:211.0px;top:116px;width:132px;height:58px;line-height:58px;text-align:center;font-size:29px;white-space:nowrap;color:#404040;">27</div>
<div style="position:absolute;left:344px;top:76px;width:132px;height:31px;background:#134a66;"></div>
<div style="position:absolute;left:345.0px;top:77.7px;width:132px;height:29.6px;line-height:29.6px;text-align:center;font-size:14.8px;white-space:nowrap;color:#fff;font-weight:bold;">Total Income</div>
<div style="position:absolute;left:344px;top:108px;width:132px;height:71px;background:#f2f2f2;"></div>
<div style="position:absolute;left:336px;top:123.2px;width:130px;height:42.6px;line-height:42.6px;text-align:right;font-size:21.3px;white-space:nowrap;color:#404040;">431,430</div>
<div style="position:absolute;left:478px;top:76px;width:132px;height:31px;background:#134a66;"></div>
<div style="position:absolute;left:479.0px;top:77.7px;width:132px;height:29.6px;line-height:29.6px;text-align:center;font-size:14.8px;white-space:nowrap;color:#fff;font-weight:bold;">Tax Amount</div>
<div style="position:absolute;left:478px;top:108px;width:132px;height:71px;background:#f2f2f2;"></div>
<div style="position:absolute;left:470px;top:123.2px;width:130px;height:42.6px;line-height:42.6px;text-align:right;font-size:21.3px;white-space:nowrap;color:#404040;">53,841</div>
<div style="position:absolute;left:612px;top:76px;width:132px;height:31px;background:#134a66;"></div>
<div style="position:absolute;left:613.0px;top:77.7px;width:132px;height:29.6px;line-height:29.6px;text-align:center;font-size:14.8px;white-space:nowrap;color:#fff;font-weight:bold;">Net Amount</div>
<div style="position:absolute;left:612px;top:108px;width:132px;height:71px;background:#f2f2f2;"></div>
<div style="position:absolute;left:604px;top:123.2px;width:130px;height:42.6px;line-height:42.6px;text-align:right;font-size:21.3px;white-space:nowrap;color:#404040;">377,589</div>
<div style="position:absolute;left:276.0px;top:175.2px;width:400px;height:33.6px;line-height:33.6px;text-align:center;font-size:16.8px;white-space:nowrap;color:#595959;">Monthly Invoice Amount VS Tax Amount</div>
<div style="position:absolute;left:362px;top:210px;width:5px;height:5px;background:#2bb58b;"></div>
<div style="position:absolute;left:368px;top:202.7px;height:19.6px;line-height:19.6px;font-size:9.8px;white-space:nowrap;color:#595959;">Sum of Total Amount</div>
<div style="position:absolute;left:494px;top:210px;width:5px;height:5px;background:#a5a5a5;"></div>
<div style="position:absolute;left:500px;top:202.7px;height:19.6px;line-height:19.6px;font-size:9.8px;white-space:nowrap;color:#595959;">Sum of Tax Amount</div>
<div style="position:absolute;left:234px;top:335px;width:14px;height:29px;background:#2bb58b;"></div>
<div style="position:absolute;left:252px;top:361px;width:15px;height:3px;background:#a5a5a5;"></div>
<div style="position:absolute;left:211.5px;top:314.4px;width:60px;height:19.2px;line-height:19.2px;text-align:center;font-size:9.6px;white-space:nowrap;color:#404040;">28,547</div>
<div style="position:absolute;left:231.5px;top:340.4px;width:60px;height:19.2px;line-height:19.2px;text-align:center;font-size:9.6px;white-space:nowrap;color:#404040;">2,595</div>
<div style="position:absolute;left:220.5px;top:365.5px;width:60px;height:22px;line-height:22px;text-align:center;font-size:11px;white-space:nowrap;color:#595959;">Nov</div>
<div style="position:absolute;left:299px;top:295px;width:14px;height:69px;background:#2bb58b;"></div>
<div style="position:absolute;left:317px;top:359px;width:15px;height:5px;background:#a5a5a5;"></div>
<div style="position:absolute;left:276.5px;top:274.4px;width:60px;height:19.2px;line-height:19.2px;text-align:center;font-size:9.6px;white-space:nowrap;color:#404040;">69,299</div>
<div style="position:absolute;left:296.5px;top:338.4px;width:60px;height:19.2px;line-height:19.2px;text-align:center;font-size:9.6px;white-space:nowrap;color:#404040;">4,985</div>
<div style="position:absolute;left:285.5px;top:365.5px;width:60px;height:22px;line-height:22px;text-align:center;font-size:11px;white-space:nowrap;color:#595959;">Dec</div>
<div style="position:absolute;left:364px;top:332px;width:14px;height:32px;background:#2bb58b;"></div>
<div style="position:absolute;left:382px;top:360px;width:15px;height:4px;background:#a5a5a5;"></div>
<div style="position:absolute;left:341.5px;top:311.4px;width:60px;height:19.2px;line-height:19.2px;text-align:center;font-size:9.6px;white-space:nowrap;color:#404040;">32,237</div>
<div style="position:absolute;left:361.5px;top:339.4px;width:60px;height:19.2px;line-height:19.2px;text-align:center;font-size:9.6px;white-space:nowrap;color:#404040;">4,472</div>
<div style="position:absolute;left:350.5px;top:365.5px;width:60px;height:22px;line-height:22px;text-align:center;font-size:11px;white-space:nowrap;color:#595959;">Jan</div>
<div style="position:absolute;left:429px;top:290px;width:14px;height:74px;background:#2bb58b;"></div>
<div style="position:absolute;left:447px;top:354px;width:15px;height:10px;background:#a5a5a5;"></div>
<div style="position:absolute;left:406.5px;top:269.4px;width:60px;height:19.2px;line-height:19.2px;text-align:center;font-size:9.6px;white-space:nowrap;color:#404040;">74,187</div>
<div style="position:absolute;left:426.5px;top:333.4px;width:60px;height:19.2px;line-height:19.2px;text-align:center;font-size:9.6px;white-space:nowrap;color:#404040;">10,053</div>
<div style="position:absolute;left:415.5px;top:365.5px;width:60px;height:22px;line-height:22px;text-align:center;font-size:11px;white-space:nowrap;color:#595959;">Feb</div>
<div style="position:absolute;left:494px;top:310px;width:14px;height:54px;background:#2bb58b;"></div>
<div style="position:absolute;left:512px;top:357px;width:15px;height:7px;background:#a5a5a5;"></div>
<div style="position:absolute;left:471.5px;top:289.4px;width:60px;height:19.2px;line-height:19.2px;text-align:center;font-size:9.6px;white-space:nowrap;color:#404040;">53,803</div>
<div style="position:absolute;left:491.5px;top:336.4px;width:60px;height:19.2px;line-height:19.2px;text-align:center;font-size:9.6px;white-space:nowrap;color:#404040;">7,238</div>
<div style="position:absolute;left:480.5px;top:365.5px;width:60px;height:22px;line-height:22px;text-align:center;font-size:11px;white-space:nowrap;color:#595959;">Mar</div>
<div style="position:absolute;left:559px;top:315px;width:14px;height:49px;background:#2bb58b;"></div>
<div style="position:absolute;left:577px;top:358px;width:15px;height:6px;background:#a5a5a5;"></div>
<div style="position:absolute;left:536.5px;top:294.4px;width:60px;height:19.2px;line-height:19.2px;text-align:center;font-size:9.6px;white-space:nowrap;color:#404040;">49,255</div>
<div style="position:absolute;left:556.5px;top:337.4px;width:60px;height:19.2px;line-height:19.2px;text-align:center;font-size:9.6px;white-space:nowrap;color:#404040;">5,942</div>
<div style="position:absolute;left:545.5px;top:365.5px;width:60px;height:22px;line-height:22px;text-align:center;font-size:11px;white-space:nowrap;color:#595959;">Apr</div>
<div style="position:absolute;left:624px;top:358px;width:14px;height:6px;background:#2bb58b;"></div>
<div style="position:absolute;left:642px;top:363px;width:15px;height:1px;background:#a5a5a5;"></div>
<div style="position:absolute;left:601.5px;top:337.4px;width:60px;height:19.2px;line-height:19.2px;text-align:center;font-size:9.6px;white-space:nowrap;color:#404040;">6,101</div>
<div style="position:absolute;left:621.5px;top:342.4px;width:60px;height:19.2px;line-height:19.2px;text-align:center;font-size:9.6px;white-space:nowrap;color:#404040;">555</div>
<div style="position:absolute;left:610.5px;top:365.5px;width:60px;height:22px;line-height:22px;text-align:center;font-size:11px;white-space:nowrap;color:#595959;">Jun</div>
<div style="position:absolute;left:689px;top:246px;width:14px;height:118px;background:#2bb58b;"></div>
<div style="position:absolute;left:707px;top:346px;width:15px;height:18px;background:#a5a5a5;"></div>
<div style="position:absolute;left:666.5px;top:225.4px;width:60px;height:19.2px;line-height:19.2px;text-align:center;font-size:9.6px;white-space:nowrap;color:#404040;">118,000</div>
<div style="position:absolute;left:686.5px;top:325.4px;width:60px;height:19.2px;line-height:19.2px;text-align:center;font-size:9.6px;white-space:nowrap;color:#404040;">18,000</div>
<div style="position:absolute;left:675.5px;top:365.5px;width:60px;height:22px;line-height:22px;text-align:center;font-size:11px;white-space:nowrap;color:#595959;">Jul</div>
<div style="position:absolute;left:217px;top:364px;width:520px;height:1px;background:#d9d9d9;"></div>
<div style="position:absolute;left:217px;top:364px;width:1px;height:40px;background:#d9d9d9;"></div>
<div style="position:absolute;left:347px;top:364px;width:1px;height:40px;background:#d9d9d9;"></div>
<div style="position:absolute;left:737px;top:364px;width:1px;height:40px;background:#d9d9d9;"></div>
<div style="position:absolute;left:252.0px;top:385px;width:60px;height:22px;line-height:22px;text-align:center;font-size:11px;white-space:nowrap;color:#595959;">2020</div>
<div style="position:absolute;left:512.0px;top:385px;width:60px;height:22px;line-height:22px;text-align:center;font-size:11px;white-space:nowrap;color:#595959;">2021</div>
<div style="position:absolute;left:764.0px;top:71.7px;width:200px;height:28.6px;line-height:28.6px;text-align:center;font-size:14.3px;white-space:nowrap;color:#595959;">Invoice Payment Status</div>
<div style="position:absolute;left:794px;top:105px;width:1px;height:293px;background:#d9d9d9;"></div>
<div style="position:absolute;left:795px;top:152px;width:129px;height:52px;background:#2bb58b;"></div>
<div style="position:absolute;left:795px;top:299px;width:55px;height:52px;background:#c00000;"></div>
<div style="position:absolute;left:726px;top:168.0px;width:60px;height:19.0px;line-height:19.0px;text-align:right;font-size:9.5px;white-space:nowrap;color:#404040;">Paid</div>
<div style="position:absolute;left:726px;top:315.5px;width:60px;height:19.0px;line-height:19.0px;text-align:right;font-size:9.5px;white-space:nowrap;color:#404040;">Not Paid</div>
<div style="position:absolute;left:857px;top:168.0px;width:60px;height:19.0px;line-height:19.0px;text-align:right;font-size:9.5px;white-space:nowrap;color:#fff;">302,084</div>
<div style="position:absolute;left:796.0px;top:316.0px;width:60px;height:19.0px;line-height:19.0px;text-align:center;font-size:9.5px;white-space:nowrap;color:#fff;">129,346</div>
<div style="position:absolute;left:995.0px;top:73px;width:200px;height:24px;line-height:24px;text-align:center;font-size:12px;white-space:nowrap;color:#595959;">Average Payment Lead Time (in</div>
<div style="position:absolute;left:995.0px;top:86.5px;width:200px;height:24px;line-height:24px;text-align:center;font-size:12px;white-space:nowrap;color:#595959;">Days)</div>
<div style="position:absolute;left:1048px;top:103px;width:1px;height:294px;background:#d9d9d9;"></div>
<div style="position:absolute;left:961px;top:98.60000000000001px;width:80px;height:19.2px;line-height:19.2px;text-align:right;font-size:9.6px;white-space:nowrap;color:#595959;">Company 10</div>
<div style="position:absolute;left:961px;top:109.45px;width:80px;height:19.2px;line-height:19.2px;text-align:right;font-size:9.6px;white-space:nowrap;color:#595959;">Company 25</div>
<div style="position:absolute;left:961px;top:120.29999999999998px;width:80px;height:19.2px;line-height:19.2px;text-align:right;font-size:9.6px;white-space:nowrap;color:#595959;">Company 8</div>
<div style="position:absolute;left:961px;top:131.15px;width:80px;height:19.2px;line-height:19.2px;text-align:right;font-size:9.6px;white-space:nowrap;color:#595959;">Company 18</div>
<div style="position:absolute;left:961px;top:142.0px;width:80px;height:19.2px;line-height:19.2px;text-align:right;font-size:9.6px;white-space:nowrap;color:#595959;">Company 7</div>
<div style="position:absolute;left:961px;top:152.85px;width:80px;height:19.2px;line-height:19.2px;text-align:right;font-size:9.6px;white-space:nowrap;color:#595959;">Company 15</div>
<div style="position:absolute;left:961px;top:163.7px;width:80px;height:19.2px;line-height:19.2px;text-align:right;font-size:9.6px;white-space:nowrap;color:#595959;">Company 20</div>
<div style="position:absolute;left:961px;top:174.54999999999998px;width:80px;height:19.2px;line-height:19.2px;text-align:right;font-size:9.6px;white-space:nowrap;color:#595959;">Company 12</div>
<div style="position:absolute;left:961px;top:185.4px;width:80px;height:19.2px;line-height:19.2px;text-align:right;font-size:9.6px;white-space:nowrap;color:#595959;">Company 23</div>
<div style="position:absolute;left:961px;top:196.24999999999997px;width:80px;height:19.2px;line-height:19.2px;text-align:right;font-size:9.6px;white-space:nowrap;color:#595959;">Company 16</div>
<div style="position:absolute;left:961px;top:207.1px;width:80px;height:19.2px;line-height:19.2px;text-align:right;font-size:9.6px;white-space:nowrap;color:#595959;">Company 13</div>
<div style="position:absolute;left:961px;top:217.95px;width:80px;height:19.2px;line-height:19.2px;text-align:right;font-size:9.6px;white-space:nowrap;color:#595959;">Company 3</div>
<div style="position:absolute;left:961px;top:228.79999999999998px;width:80px;height:19.2px;line-height:19.2px;text-align:right;font-size:9.6px;white-space:nowrap;color:#595959;">Company 2</div>
<div style="position:absolute;left:1049px;top:236.7px;width:134px;height:4px;background:#134a66;"></div>
<div style="position:absolute;left:1190px;top:228.39999999999998px;height:19.6px;line-height:19.6px;font-size:9.8px;white-space:nowrap;color:#404040;">13</div>
<div style="position:absolute;left:961px;top:239.64999999999998px;width:80px;height:19.2px;line-height:19.2px;text-align:right;font-size:9.6px;white-space:nowrap;color:#595959;">Company 21</div>
<div style="position:absolute;left:1049px;top:247.54999999999998px;width:134px;height:4px;background:#134a66;"></div>
<div style="position:absolute;left:1190px;top:239.24999999999997px;height:19.6px;line-height:19.6px;font-size:9.8px;white-space:nowrap;color:#404040;">13</div>
<div style="position:absolute;left:961px;top:250.49999999999997px;width:80px;height:19.2px;line-height:19.2px;text-align:right;font-size:9.6px;white-space:nowrap;color:#595959;">Company 27</div>
<div style="position:absolute;left:1049px;top:258.4px;width:124px;height:4px;background:#134a66;"></div>
<div style="position:absolute;left:1180px;top:250.09999999999997px;height:19.6px;line-height:19.6px;font-size:9.8px;white-space:nowrap;color:#404040;">12</div>
<div style="position:absolute;left:961px;top:261.34999999999997px;width:80px;height:19.2px;line-height:19.2px;text-align:right;font-size:9.6px;white-space:nowrap;color:#595959;">Company 5</div>
<div style="position:absolute;left:1049px;top:269.25px;width:124px;height:4px;background:#134a66;"></div>
<div style="position:absolute;left:1180px;top:260.95px;height:19.6px;line-height:19.6px;font-size:9.8px;white-space:nowrap;color:#404040;">12</div>
<div style="position:absolute;left:961px;top:272.2px;width:80px;height:19.2px;line-height:19.2px;text-align:right;font-size:9.6px;white-space:nowrap;color:#595959;">Company 11</div>
<div style="position:absolute;left:1049px;top:280.1px;width:103px;height:4px;background:#134a66;"></div>
<div style="position:absolute;left:1159px;top:271.8px;height:19.6px;line-height:19.6px;font-size:9.8px;white-space:nowrap;color:#404040;">10</div>
<div style="position:absolute;left:961px;top:283.04999999999995px;width:80px;height:19.2px;line-height:19.2px;text-align:right;font-size:9.6px;white-space:nowrap;color:#595959;">Company 22</div>
<div style="position:absolute;left:1049px;top:290.95px;width:103px;height:4px;background:#134a66;"></div>
<div style="position:absolute;left:1159px;top:282.65px;height:19.6px;line-height:19.6px;font-size:9.8px;white-space:nowrap;color:#404040;">10</div>
<div style="position:absolute;left:961px;top:293.8999999999999px;width:80px;height:19.2px;line-height:19.2px;text-align:right;font-size:9.6px;white-space:nowrap;color:#595959;">Company 6</div>
<div style="position:absolute;left:1049px;top:301.79999999999995px;width:82px;height:4px;background:#134a66;"></div>
<div style="position:absolute;left:1138px;top:293.49999999999994px;height:19.6px;line-height:19.6px;font-size:9.8px;white-space:nowrap;color:#404040;">8</div>
<div style="position:absolute;left:961px;top:304.74999999999994px;width:80px;height:19.2px;line-height:19.2px;text-align:right;font-size:9.6px;white-space:nowrap;color:#595959;">Company 26</div>
<div style="position:absolute;left:1049px;top:312.65px;width:72px;height:4px;background:#134a66;"></div>
<div style="position:absolute;left:1128px;top:304.34999999999997px;height:19.6px;line-height:19.6px;font-size:9.8px;white-space:nowrap;color:#404040;">7</div>
<div style="position:absolute;left:961px;top:315.59999999999997px;width:80px;height:19.2px;line-height:19.2px;text-align:right;font-size:9.6px;white-space:nowrap;color:#595959;">Company 9</div>
<div style="position:absolute;left:1049px;top:323.5px;width:62px;height:4px;background:#134a66;"></div>
<div style="position:absolute;left:1118px;top:315.2px;height:19.6px;line-height:19.6px;font-size:9.8px;white-space:nowrap;color:#404040;">6</div>
<div style="position:absolute;left:961px;top:326.45px;width:80px;height:19.2px;line-height:19.2px;text-align:right;font-size:9.6px;white-space:nowrap;color:#595959;">Company 14</div>
<div style="position:absolute;left:1049px;top:334.35px;width:62px;height:4px;background:#134a66;"></div>
<div style="position:absolute;left:1118px;top:326.05px;height:19.6px;line-height:19.6px;font-size:9.8px;white-space:nowrap;color:#404040;">6</div>
<div style="position:absolute;left:961px;top:337.29999999999995px;width:80px;height:19.2px;line-height:19.2px;text-align:right;font-size:9.6px;white-space:nowrap;color:#595959;">Company 24</div>
<div style="position:absolute;left:1049px;top:345.2px;width:41px;height:4px;background:#134a66;"></div>
<div style="position:absolute;left:1097px;top:336.9px;height:19.6px;line-height:19.6px;font-size:9.8px;white-space:nowrap;color:#404040;">4</div>
<div style="position:absolute;left:961px;top:348.1499999999999px;width:80px;height:19.2px;line-height:19.2px;text-align:right;font-size:9.6px;white-space:nowrap;color:#595959;">Company 17</div>
<div style="position:absolute;left:1049px;top:356.04999999999995px;width:41px;height:4px;background:#134a66;"></div>
<div style="position:absolute;left:1097px;top:347.74999999999994px;height:19.6px;line-height:19.6px;font-size:9.8px;white-space:nowrap;color:#404040;">4</div>
<div style="position:absolute;left:961px;top:358.99999999999994px;width:80px;height:19.2px;line-height:19.2px;text-align:right;font-size:9.6px;white-space:nowrap;color:#595959;">Company 19</div>
<div style="position:absolute;left:1049px;top:366.9px;width:31px;height:4px;background:#134a66;"></div>
<div style="position:absolute;left:1087px;top:358.59999999999997px;height:19.6px;line-height:19.6px;font-size:9.8px;white-space:nowrap;color:#404040;">3</div>
<div style="position:absolute;left:961px;top:369.84999999999997px;width:80px;height:19.2px;line-height:19.2px;text-align:right;font-size:9.6px;white-space:nowrap;color:#595959;">Company 4</div>
<div style="position:absolute;left:1049px;top:377.75px;width:31px;height:4px;background:#134a66;"></div>
<div style="position:absolute;left:1087px;top:369.45px;height:19.6px;line-height:19.6px;font-size:9.8px;white-space:nowrap;color:#404040;">3</div>
<div style="position:absolute;left:961px;top:380.69999999999993px;width:80px;height:19.2px;line-height:19.2px;text-align:right;font-size:9.6px;white-space:nowrap;color:#595959;">Company 1</div>
<div style="position:absolute;left:1049px;top:388.59999999999997px;width:31px;height:4px;background:#134a66;"></div>
<div style="position:absolute;left:1087px;top:380.29999999999995px;height:19.6px;line-height:19.6px;font-size:9.8px;white-space:nowrap;color:#404040;">3</div>
<div style="position:absolute;left:1230.0px;top:76.7px;width:240px;height:33.6px;line-height:33.6px;text-align:center;font-size:16.8px;white-space:nowrap;color:#595959;">Amount Per Payment</div>
<div style="position:absolute;left:1230.0px;top:95.7px;width:240px;height:33.6px;line-height:33.6px;text-align:center;font-size:16.8px;white-space:nowrap;color:#595959;">Method</div>
<svg style="position:absolute;left:0;top:0" width="1917" height="1027"><path d="M1350 258 L1350.00 139.00 A119 119 0 0 1 1436.67 339.55 Z" fill="#4472c4" stroke="#fff" stroke-width="1.5" stroke-linejoin="round"/><path d="M1350 258 L1436.67 339.55 A119 119 0 0 1 1266.06 342.35 Z" fill="#ed7d31" stroke="#fff" stroke-width="1.5" stroke-linejoin="round"/><path d="M1350 258 L1266.06 342.35 A119 119 0 0 1 1236.78 294.64 Z" fill="#a5a5a5" stroke="#fff" stroke-width="1.5" stroke-linejoin="round"/><path d="M1350 258 L1236.78 294.64 A119 119 0 0 1 1350.00 139.00 Z" fill="#ffc000" stroke="#fff" stroke-width="1.5" stroke-linejoin="round"/><path d="M1248.5 320 L1248.5 359" stroke="#a6a6a6" stroke-width="1"/></svg>
<div style="position:absolute;left:1260px;top:187px;width:50px;height:41px;background:#ffff99;display:flex;flex-direction:column;justify-content:center;align-items:center;text-align:center;font-size:10.5px;line-height:12.5px;color:#262626;">(blank)<br>129,346<br>30%</div>
<div style="position:absolute;left:1388px;top:188px;width:49px;height:53px;background:#ffff99;display:flex;flex-direction:column;justify-content:center;align-items:center;text-align:center;font-size:10.5px;line-height:12.5px;color:#262626;">Bank<br>Transfer<br>159,698<br>37%</div>
<div style="position:absolute;left:1327px;top:326px;width:49px;height:41px;background:#ffff99;display:flex;flex-direction:column;justify-content:center;align-items:center;text-align:center;font-size:10.5px;line-height:12.5px;color:#262626;">Cash<br>109,779<br>25%</div>
<div style="position:absolute;left:1227px;top:359px;width:43px;height:41px;background:#ffff99;display:flex;flex-direction:column;justify-content:center;align-items:center;text-align:center;font-size:10.5px;line-height:12.5px;color:#262626;">PayPal<br>32,607<br>8%</div>
<div style="position:absolute;left:1483.0px;top:76.2px;width:400px;height:33.6px;line-height:33.6px;text-align:center;font-size:16.8px;white-space:nowrap;color:#595959;">Revenue Amount per service provided</div>
<div style="position:absolute;left:1480px;top:107px;width:151px;height:290px;background:#ffc000;"></div>
<div style="position:absolute;left:1484.4px;top:365px;font-size:10.3px;line-height:14px;color:#fff;font-weight:bold;text-align:center;">Service 4<br>160,674</div>
<div style="position:absolute;left:1632px;top:107px;width:147px;height:165px;background:#264478;"></div>
<div style="position:absolute;left:1636.4px;top:240px;font-size:10.3px;line-height:14px;color:#fff;font-weight:bold;text-align:center;">Service 7<br>89,893</div>
<div style="position:absolute;left:1780px;top:107px;width:106px;height:165px;background:#a5a5a5;"></div>
<div style="position:absolute;left:1784.4px;top:240px;font-size:10.3px;line-height:14px;color:#fff;font-weight:bold;text-align:center;">Service 3<br>64,191</div>
<div style="position:absolute;left:1632px;top:273px;width:87px;height:124px;background:#5b9bd5;"></div>
<div style="position:absolute;left:1636.4px;top:365px;font-size:10.3px;line-height:14px;color:#fff;font-weight:bold;text-align:center;">Service 5<br>40,278</div>
<div style="position:absolute;left:1720px;top:273px;width:73px;height:124px;background:#4472c4;"></div>
<div style="position:absolute;left:1724.4px;top:365px;font-size:10.3px;line-height:14px;color:#fff;font-weight:bold;text-align:center;">Service 1<br>34,037</div>
<div style="position:absolute;left:1794px;top:273px;width:92px;height:72px;background:#ed7d31;"></div>
<div style="position:absolute;left:1798.4px;top:313px;font-size:10.3px;line-height:14px;color:#fff;font-weight:bold;text-align:center;">Service 2<br>25,015</div>
<div style="position:absolute;left:1794px;top:346px;width:92px;height:51px;background:#70ad47;"></div>
<div style="position:absolute;left:1798.4px;top:365px;font-size:10.3px;line-height:14px;color:#fff;font-weight:bold;text-align:center;">Service 6<br>17,343</div>
<div style="position:absolute;left:65px;top:80px;width:135px;height:31px;background:#bfbfbf;border:1px solid #a8a8a8;border-radius:6px;box-shadow:0 1px 3px rgba(0,0,0,0.4);"></div>
<svg style="position:absolute;left:67px;top:85px" width="24" height="20" viewBox="0 0 24 20"><path d="M6 1 H16 V9 H22 L11 19 L0 9 H6 Z" fill="#808080"/></svg>
<div style="position:absolute;left:93px;top:80.7px;height:26.6px;line-height:26.6px;font-size:13.3px;white-space:nowrap;color:#fff;">Hide Dashboard</div>
<div style="position:absolute;left:68px;top:116.7px;height:23.6px;line-height:23.6px;font-size:11.8px;white-space:nowrap;color:#000;">Month</div>
<svg style="position:absolute;left:155px;top:120px" width="16" height="15" viewBox="0 0 16 15"><path d="M1 2.6 L2.4 4 L5.4 0.2 M1 7.2 L2.4 8.6 L5.4 4.8 M1 11.8 L2.4 13.2 L5.4 9.4" stroke="#707070" stroke-width="1.1" fill="none"/><path d="M7.2 2.5 H14.8 M7.2 11.5 H14.8" stroke="#6a6a6a" stroke-width="1"/><path d="M7.2 7 H14.8" stroke="#858585" stroke-width="1.6"/></svg>
<svg style="position:absolute;left:184px;top:120px" width="15" height="15" viewBox="0 0 15 15"><path d="M1 1.2 H10.8 L7.6 5.6 V10.8 H4.2 V5.6 Z" fill="#ababab"/><path d="M8.5 7.5 L13.5 14 M13.5 7.5 L8.5 14" stroke="#c4c4c4" stroke-width="1.1"/></svg>
<div style="position:absolute;left:68px;top:143px;width:55px;height:21px;overflow:hidden;"><div style="width:55px;height:21px;background:#9fa6ad;border-radius:4px;font-size:12.3px;line-height:23px;padding-left:8px;color:#000;">Jan</div></div>
<div style="position:absolute;left:126px;top:143px;width:55px;height:21px;overflow:hidden;"><div style="width:55px;height:21px;background:#9fa6ad;border-radius:4px;font-size:12.3px;line-height:23px;padding-left:8px;color:#000;">Feb</div></div>
<div style="position:absolute;left:68px;top:167px;width:55px;height:21px;overflow:hidden;"><div style="width:55px;height:21px;background:#9fa6ad;border-radius:4px;font-size:12.3px;line-height:23px;padding-left:8px;color:#000;">Mar</div></div>
<div style="position:absolute;left:126px;top:167px;width:55px;height:21px;overflow:hidden;"><div style="width:55px;height:21px;background:#9fa6ad;border-radius:4px;font-size:12.3px;line-height:23px;padding-left:8px;color:#000;">Apr</div></div>
<div style="position:absolute;left:68px;top:191px;width:55px;height:15px;overflow:hidden;"><div style="width:55px;height:21px;background:#9fa6ad;border-radius:4px;font-size:12.3px;line-height:23px;padding-left:8px;color:#000;">Jun</div></div>
<div style="position:absolute;left:126px;top:191px;width:55px;height:15px;overflow:hidden;"><div style="width:55px;height:21px;background:#9fa6ad;border-radius:4px;font-size:12.3px;line-height:23px;padding-left:8px;color:#000;">Jul</div></div>
<div style="position:absolute;left:185px;top:143px;width:16px;height:63px;background:#f0f0f0;"></div>
<div style="position:absolute;left:192px;top:160px;width:2px;height:14px;background:#8a8a8a;"></div>
<div style="position:absolute;left:68px;top:216.7px;height:23.6px;line-height:23.6px;font-size:11.8px;white-space:nowrap;color:#000;">Year</div>
<svg style="position:absolute;left:155px;top:220px" width="16" height="15" viewBox="0 0 16 15"><path d="M1 2.6 L2.4 4 L5.4 0.2 M1 7.2 L2.4 8.6 L5.4 4.8 M1 11.8 L2.4 13.2 L5.4 9.4" stroke="#707070" stroke-width="1.1" fill="none"/><path d="M7.2 2.5 H14.8 M7.2 11.5 H14.8" stroke="#6a6a6a" stroke-width="1"/><path d="M7.2 7 H14.8" stroke="#858585" stroke-width="1.6"/></svg>
<svg style="position:absolute;left:184px;top:220px" width="15" height="15" viewBox="0 0 15 15"><path d="M1 1.2 H10.8 L7.6 5.6 V10.8 H4.2 V5.6 Z" fill="#ababab"/><path d="M8.5 7.5 L13.5 14 M13.5 7.5 L8.5 14" stroke="#c4c4c4" stroke-width="1.1"/></svg>
<div style="position:absolute;left:68px;top:242px;width:65px;height:19px;overflow:hidden;"><div style="width:65px;height:19px;background:#9fa6ad;border-radius:4px;font-size:12.3px;line-height:21px;padding-left:8px;color:#000;">2020</div></div>
<div style="position:absolute;left:136px;top:242px;width:65px;height:19px;overflow:hidden;"><div style="width:65px;height:19px;background:#9fa6ad;border-radius:4px;font-size:12.3px;line-height:21px;padding-left:8px;color:#000;">2021</div></div>
<div style="position:absolute;left:68px;top:266.7px;height:23.6px;line-height:23.6px;font-size:11.8px;white-space:nowrap;color:#000;">Quarter</div>
<svg style="position:absolute;left:155px;top:270px" width="16" height="15" viewBox="0 0 16 15"><path d="M1 2.6 L2.4 4 L5.4 0.2 M1 7.2 L2.4 8.6 L5.4 4.8 M1 11.8 L2.4 13.2 L5.4 9.4" stroke="#707070" stroke-width="1.1" fill="none"/><path d="M7.2 2.5 H14.8 M7.2 11.5 H14.8" stroke="#6a6a6a" stroke-width="1"/><path d="M7.2 7 H14.8" stroke="#858585" stroke-width="1.6"/></svg>
<svg style="position:absolute;left:184px;top:270px" width="15" height="15" viewBox="0 0 15 15"><path d="M1 1.2 H10.8 L7.6 5.6 V10.8 H4.2 V5.6 Z" fill="#ababab"/><path d="M8.5 7.5 L13.5 14 M13.5 7.5 L8.5 14" stroke="#c4c4c4" stroke-width="1.1"/></svg>
<div style="position:absolute;left:68px;top:293px;width:55px;height:21px;overflow:hidden;"><div style="width:55px;height:21px;background:#9fa6ad;border-radius:4px;font-size:12.3px;line-height:23px;padding-left:8px;color:#000;">Q1</div></div>
<div style="position:absolute;left:126px;top:293px;width:55px;height:21px;overflow:hidden;"><div style="width:55px;height:21px;background:#9fa6ad;border-radius:4px;font-size:12.3px;line-height:23px;padding-left:8px;color:#000;">Q2</div></div>
<div style="position:absolute;left:68px;top:317px;width:55px;height:19px;overflow:hidden;"><div style="width:55px;height:21px;background:#9fa6ad;border-radius:4px;font-size:12.3px;line-height:23px;padding-left:8px;color:#000;">Q3</div></div>
<div style="position:absolute;left:126px;top:317px;width:55px;height:19px;overflow:hidden;"><div style="width:55px;height:21px;background:#9fa6ad;border-radius:4px;font-size:12.3px;line-height:23px;padding-left:8px;color:#000;">Q4</div></div>
<div style="position:absolute;left:185px;top:293px;width:16px;height:43px;background:#f0f0f0;"></div>
<div style="position:absolute;left:192px;top:310px;width:2px;height:10px;background:#8a8a8a;"></div>
<div style="position:absolute;left:68px;top:346.2px;height:23.6px;line-height:23.6px;font-size:11.8px;white-space:nowrap;color:#000;">Paid?</div>
<svg style="position:absolute;left:155px;top:350px" width="16" height="15" viewBox="0 0 16 15"><path d="M1 2.6 L2.4 4 L5.4 0.2 M1 7.2 L2.4 8.6 L5.4 4.8 M1 11.8 L2.4 13.2 L5.4 9.4" stroke="#707070" stroke-width="1.1" fill="none"/><path d="M7.2 2.5 H14.8 M7.2 11.5 H14.8" stroke="#6a6a6a" stroke-width="1"/><path d="M7.2 7 H14.8" stroke="#858585" stroke-width="1.6"/></svg>
<svg style="position:absolute;left:184px;top:350px" width="15" height="15" viewBox="0 0 15 15"><path d="M1 1.2 H10.8 L7.6 5.6 V10.8 H4.2 V5.6 Z" fill="#ababab"/><path d="M8.5 7.5 L13.5 14 M13.5 7.5 L8.5 14" stroke="#c4c4c4" stroke-width="1.1"/></svg>
<div style="position:absolute;left:68px;top:371px;width:65px;height:21px;overflow:hidden;"><div style="width:65px;height:21px;background:#9fa6ad;border-radius:4px;font-size:12.3px;line-height:23px;padding-left:8px;color:#000;">Not Paid</div></div>
<div style="position:absolute;left:136px;top:371px;width:65px;height:21px;overflow:hidden;"><div style="width:65px;height:21px;background:#9fa6ad;border-radius:4px;font-size:12.3px;line-height:23px;padding-left:8px;color:#000;">Paid</div></div>
<div style="position:absolute;left:63.5px;top:440px;width:50px;height:22px;line-height:22px;text-align:center;font-size:11px;white-space:nowrap;color:#a0a0a0;">Full</div>
<div style="position:absolute;left:63.5px;top:452.5px;width:50px;height:22px;line-height:22px;text-align:center;font-size:11px;white-space:nowrap;color:#a0a0a0;">Screen</div>
<svg style="position:absolute;left:106px;top:444px" width="24" height="27" viewBox="0 0 24 27"><path d="M0 1 H8.5 L0 10.5 Z M23 1 H14.5 L23 10.5 Z M0 26 H8.5 L0 16.5 Z M23 26 H14.5 L23 16.5 Z" fill="#a6a6a6"/><path d="M3 4.5 L9 11 M20 4.5 L14 11 M3 22.5 L9 16 M20 22.5 L14 16" stroke="#a6a6a6" stroke-width="4.5"/></svg>
<div style="position:absolute;left:136px;top:446px;height:22px;line-height:22px;font-size:11px;white-space:nowrap;color:#a0a0a0;">Refresh</div>
<svg style="position:absolute;left:176px;top:441px" width="30" height="34" viewBox="0 0 30 34"><path d="M3.5 11 A12 12 0 0 1 23 6.5" stroke="#a6a6a6" stroke-width="4" fill="none" stroke-linecap="round"/><path d="M27 2.5 L27 13 L17 11 Z" fill="#a6a6a6"/><path d="M26.5 23 A12 12 0 0 1 7 27.5" stroke="#a6a6a6" stroke-width="4" fill="none" stroke-linecap="round"/><path d="M3 31.5 L3 21 L13 23 Z" fill="#a6a6a6"/></svg>
<div style="position:absolute;left:209px;top:39px;width:1px;height:961px;background:#9e9e9e;"></div>
<div style="position:absolute;left:0px;top:476px;width:1898px;height:1px;background:#a0a0a0;"></div>
<div style="position:absolute;left:1884px;top:39px;width:1px;height:1px;"></div>
<div style="position:absolute;left:1898px;top:23px;width:19px;height:1004px;background:#e4e6ea;"></div>
<div style="position:absolute;left:1901px;top:23px;width:16px;height:979px;background:#f3f3f3;border-radius:8px;"></div>
<svg style="position:absolute;left:1903px;top:26px" width="13" height="10"><path d="M2 8.5 L6.5 2 L11 8.5 Z" fill="#707070" stroke="#707070" stroke-width="1" stroke-linejoin="round"/></svg>
<div style="position:absolute;left:1905px;top:40px;width:9px;height:17px;background:#7a7a7a;border-radius:5px;"></div>
<svg style="position:absolute;left:1903px;top:988px" width="13" height="10"><path d="M2 1.5 L6.5 8 L11 1.5 Z" fill="#707070" stroke="#707070" stroke-width="1" stroke-linejoin="round"/></svg>
<div style="position:absolute;left:0px;top:1000px;width:1898px;height:27px;background:#e4e6ea;"></div>
<svg style="position:absolute;left:27px;top:1009px" width="10" height="14"><path d="M8 1 L2 7 L8 13" stroke="#9a9a9a" stroke-width="1.2" fill="none"/></svg>
<svg style="position:absolute;left:59px;top:1009px" width="10" height="14"><path d="M2 1 L8 7 L2 13" stroke="#9a9a9a" stroke-width="1.2" fill="none"/></svg>
<div style="position:absolute;left:116px;top:1004px;width:91px;height:23px;background:#134a66;border-radius:5px 5px 0 0;"></div>
<div style="position:absolute;left:116.0px;top:1002.9499999999999px;width:91px;height:27.7px;line-height:27.7px;text-align:center;font-size:13.85px;white-space:nowrap;color:#fff;">Instructions</div>
<div style="position:absolute;left:211px;top:1007px;width:1px;height:18px;background:#c8c8c8;"></div>
<div style="position:absolute;left:216px;top:1004px;width:121px;height:23px;background:#9fa6ad;border-radius:5px 5px 0 0;"></div>
<div style="position:absolute;left:216.0px;top:1002.9499999999999px;width:121px;height:27.7px;line-height:27.7px;text-align:center;font-size:13.85px;white-space:nowrap;color:#111;">Setting and Lists</div>
<div style="position:absolute;left:341px;top:1007px;width:1px;height:18px;background:#c8c8c8;"></div>
<div style="position:absolute;left:347px;top:1001px;width:187px;height:26px;background:linear-gradient(#fdfefd,#b5e2d1);border-radius:6px 6px 0 0;box-shadow:0 0 1px rgba(0,0,0,0.25);"></div>
<div style="position:absolute;left:347.0px;top:998.8px;width:187px;height:28.4px;line-height:28.4px;text-align:center;font-size:14.2px;white-space:nowrap;color:#2b2b2b;">BookKeeping Management</div>
<div style="position:absolute;left:354px;top:1023px;width:173px;height:2px;background:#188038;"></div>
<div style="position:absolute;left:538px;top:1007px;width:1px;height:18px;background:#c8c8c8;"></div>
<div style="position:absolute;left:544px;top:1004px;width:93px;height:23px;background:#134a66;border-radius:5px 5px 0 0;"></div>
<div style="position:absolute;left:544.0px;top:1002.9499999999999px;width:93px;height:27.7px;line-height:27.7px;text-align:center;font-size:13.85px;white-space:nowrap;color:#fff;">Accessibility</div>
<div style="position:absolute;left:641px;top:1007px;width:1px;height:18px;background:#c8c8c8;"></div>
<svg style="position:absolute;left:682px;top:1009px" width="14" height="14"><path d="M7 1 V13 M1 7 H13" stroke="#8a8a8a" stroke-width="1.2"/></svg>
<div style="position:absolute;left:1154px;top:1011px;width:2px;height:2px;background:#444;"></div>
<div style="position:absolute;left:1154px;top:1016px;width:2px;height:2px;background:#444;"></div>
<div style="position:absolute;left:1154px;top:1021px;width:2px;height:2px;background:#444;"></div>
<div style="position:absolute;left:1171px;top:1007px;width:728px;height:17px;background:#f3f3f3;border-radius:9px;"></div>
<svg style="position:absolute;left:1175px;top:1009px" width="11" height="13"><path d="M8.5 2 L2.5 6.5 L8.5 11 Z" fill="#707070" stroke="#707070" stroke-width="1" stroke-linejoin="round"/></svg>
<div style="position:absolute;left:1188px;top:1011px;width:665px;height:9px;background:#707070;border-radius:5px;"></div>
<svg style="position:absolute;left:1885px;top:1009px" width="11" height="13"><path d="M2.5 2 L8.5 6.5 L2.5 11 Z" fill="#707070" stroke="#707070" stroke-width="1" stroke-linejoin="round"/></svg>
</body></html>
